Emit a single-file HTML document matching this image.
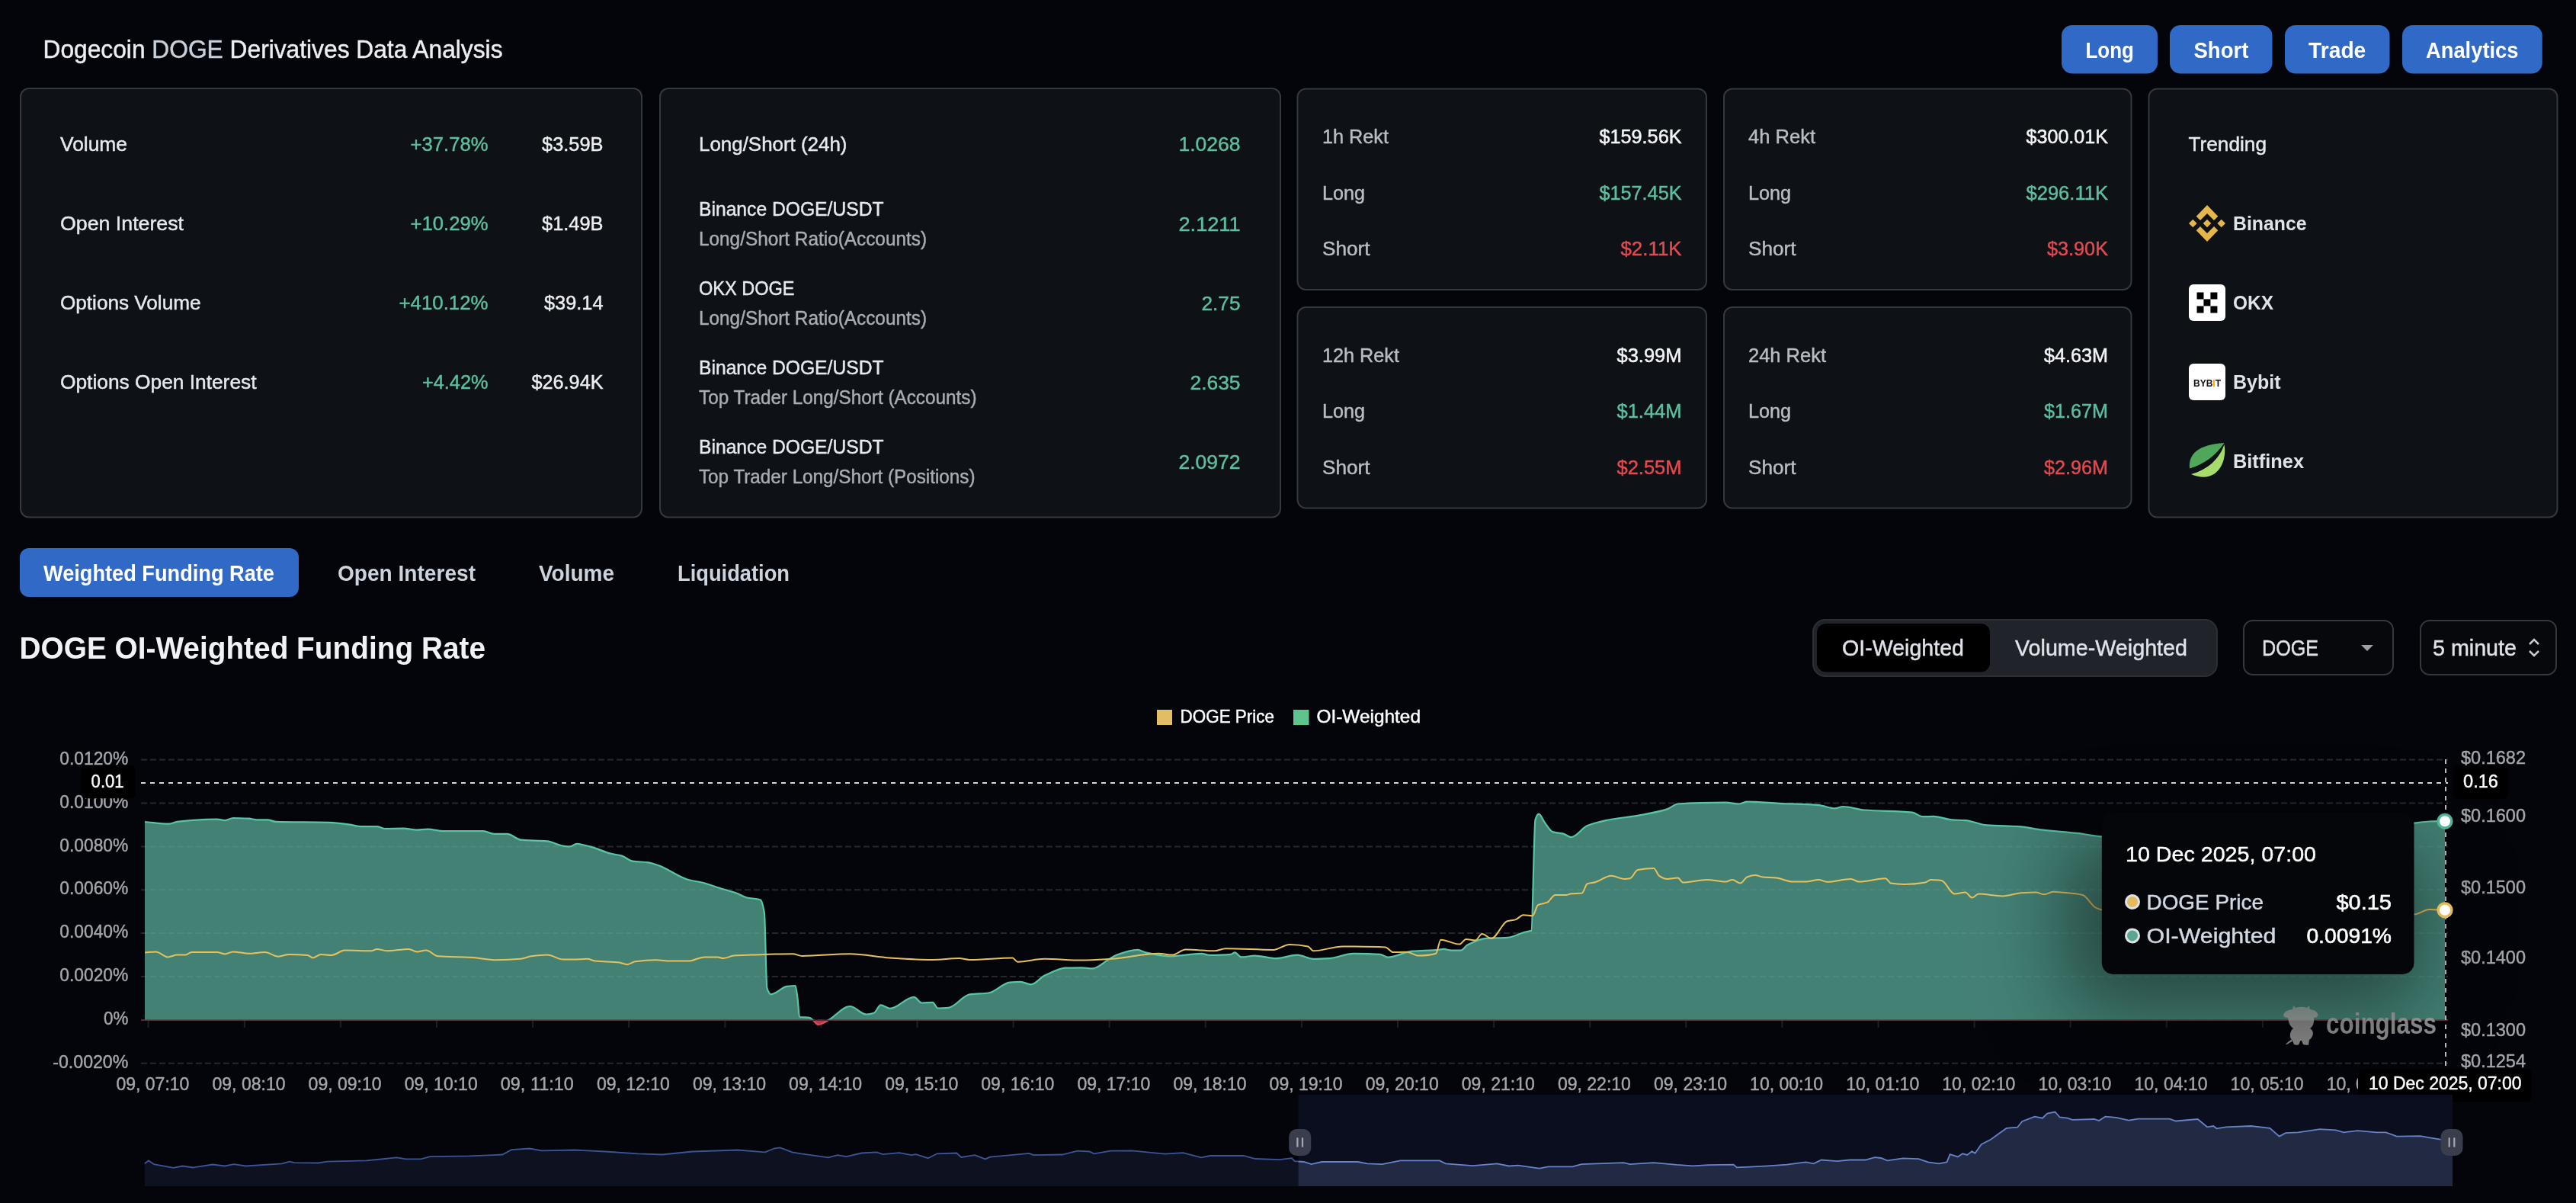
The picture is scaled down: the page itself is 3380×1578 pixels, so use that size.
<!DOCTYPE html>
<html><head><meta charset="utf-8"><title>Dogecoin DOGE Derivatives Data Analysis</title>
<style>
html,body{margin:0;padding:0;background:#04050a;width:3380px;height:1578px;overflow:hidden;}
svg{position:absolute;left:0;top:0;display:block;font-family:"Liberation Sans", sans-serif;will-change:transform;}
</style></head><body>
<svg width="3380" height="1578" viewBox="0 0 3380 1578">
<text x="56.5" y="76" font-size="33" fill="#eceef1" stroke="#eceef1" stroke-width="0.45" textLength="603" lengthAdjust="spacingAndGlyphs">Dogecoin <tspan fill="#c8d0da" stroke="#c8d0da">DOGE</tspan> Derivatives Data Analysis</text>
<rect x="2705.0" y="33.0" width="126.0" height="63.5" rx="14" fill="#3169c6"/>
<text x="2736.5" y="75.8" font-size="29" fill="#ffffff" font-weight="700" textLength="63.5" lengthAdjust="spacingAndGlyphs">Long</text>
<rect x="2847.0" y="33.0" width="134.5" height="63.5" rx="14" fill="#3169c6"/>
<text x="2878.5" y="75.8" font-size="29" fill="#ffffff" font-weight="700" textLength="71.8" lengthAdjust="spacingAndGlyphs">Short</text>
<rect x="2998.0" y="33.0" width="137.5" height="63.5" rx="14" fill="#3169c6"/>
<text x="3029.1" y="75.8" font-size="29" fill="#ffffff" font-weight="700" textLength="75.2" lengthAdjust="spacingAndGlyphs">Trade</text>
<rect x="3152.0" y="33.0" width="183.7" height="63.5" rx="14" fill="#3169c6"/>
<text x="3183.0" y="75.8" font-size="29" fill="#ffffff" font-weight="700" textLength="121.5" lengthAdjust="spacingAndGlyphs">Analytics</text>
<rect x="27.0" y="116.0" width="815.0" height="562.5" rx="11" fill="#0e1116" stroke="#343840" stroke-width="2"/>
<text x="79.0" y="198.3" font-size="26" fill="#e6e9ee" textLength="88.0" lengthAdjust="spacingAndGlyphs" stroke="#e6e9ee" stroke-width="0.45">Volume</text>
<text x="640.5" y="198.3" font-size="26" fill="#5cbf9f" text-anchor="end" textLength="102.0" lengthAdjust="spacingAndGlyphs" stroke="#5cbf9f" stroke-width="0.45">+37.78%</text>
<text x="791.5" y="198.3" font-size="26" fill="#eceef1" text-anchor="end" textLength="80.5" lengthAdjust="spacingAndGlyphs" stroke="#eceef1" stroke-width="0.45">$3.59B</text>
<text x="79.0" y="302.3" font-size="26" fill="#e6e9ee" textLength="162.0" lengthAdjust="spacingAndGlyphs" stroke="#e6e9ee" stroke-width="0.45">Open Interest</text>
<text x="640.5" y="302.3" font-size="26" fill="#5cbf9f" text-anchor="end" textLength="102.0" lengthAdjust="spacingAndGlyphs" stroke="#5cbf9f" stroke-width="0.45">+10.29%</text>
<text x="791.5" y="302.3" font-size="26" fill="#eceef1" text-anchor="end" textLength="80.5" lengthAdjust="spacingAndGlyphs" stroke="#eceef1" stroke-width="0.45">$1.49B</text>
<text x="79.0" y="406.3" font-size="26" fill="#e6e9ee" textLength="184.5" lengthAdjust="spacingAndGlyphs" stroke="#e6e9ee" stroke-width="0.45">Options Volume</text>
<text x="640.5" y="406.3" font-size="26" fill="#5cbf9f" text-anchor="end" textLength="117.0" lengthAdjust="spacingAndGlyphs" stroke="#5cbf9f" stroke-width="0.45">+410.12%</text>
<text x="791.5" y="406.3" font-size="26" fill="#eceef1" text-anchor="end" textLength="77.5" lengthAdjust="spacingAndGlyphs" stroke="#eceef1" stroke-width="0.45">$39.14</text>
<text x="79.0" y="510.3" font-size="26" fill="#e6e9ee" textLength="257.5" lengthAdjust="spacingAndGlyphs" stroke="#e6e9ee" stroke-width="0.45">Options Open Interest</text>
<text x="640.5" y="510.3" font-size="26" fill="#5cbf9f" text-anchor="end" textLength="86.5" lengthAdjust="spacingAndGlyphs" stroke="#5cbf9f" stroke-width="0.45">+4.42%</text>
<text x="791.5" y="510.3" font-size="26" fill="#eceef1" text-anchor="end" textLength="94.0" lengthAdjust="spacingAndGlyphs" stroke="#eceef1" stroke-width="0.45">$26.94K</text>
<rect x="866.0" y="116.0" width="814.0" height="562.5" rx="11" fill="#0e1116" stroke="#343840" stroke-width="2"/>
<text x="917.0" y="198.3" font-size="26" fill="#e6e9ee" textLength="194.5" lengthAdjust="spacingAndGlyphs" stroke="#e6e9ee" stroke-width="0.45">Long/Short (24h)</text>
<text x="1627.5" y="198.3" font-size="26" fill="#5cbf9f" text-anchor="end" textLength="81.0" lengthAdjust="spacingAndGlyphs" stroke="#5cbf9f" stroke-width="0.45">1.0268</text>
<text x="917.0" y="282.5" font-size="26" fill="#e6e9ee" textLength="242.5" lengthAdjust="spacingAndGlyphs" stroke="#e6e9ee" stroke-width="0.45">Binance DOGE/USDT</text>
<text x="917.0" y="322.1" font-size="25" fill="#a9adb3" textLength="299.0" lengthAdjust="spacingAndGlyphs" stroke="#a9adb3" stroke-width="0.45">Long/Short Ratio(Accounts)</text>
<text x="1627.5" y="302.8" font-size="26" fill="#5cbf9f" text-anchor="end" textLength="81.0" lengthAdjust="spacingAndGlyphs" stroke="#5cbf9f" stroke-width="0.45">2.1211</text>
<text x="917.0" y="386.5" font-size="26" fill="#e6e9ee" textLength="125.5" lengthAdjust="spacingAndGlyphs" stroke="#e6e9ee" stroke-width="0.45">OKX DOGE</text>
<text x="917.0" y="426.1" font-size="25" fill="#a9adb3" textLength="299.0" lengthAdjust="spacingAndGlyphs" stroke="#a9adb3" stroke-width="0.45">Long/Short Ratio(Accounts)</text>
<text x="1627.5" y="406.8" font-size="26" fill="#5cbf9f" text-anchor="end" textLength="51.0" lengthAdjust="spacingAndGlyphs" stroke="#5cbf9f" stroke-width="0.45">2.75</text>
<text x="917.0" y="490.5" font-size="26" fill="#e6e9ee" textLength="242.5" lengthAdjust="spacingAndGlyphs" stroke="#e6e9ee" stroke-width="0.45">Binance DOGE/USDT</text>
<text x="917.0" y="530.1" font-size="25" fill="#a9adb3" textLength="364.5" lengthAdjust="spacingAndGlyphs" stroke="#a9adb3" stroke-width="0.45">Top Trader Long/Short (Accounts)</text>
<text x="1627.5" y="510.8" font-size="26" fill="#5cbf9f" text-anchor="end" textLength="66.0" lengthAdjust="spacingAndGlyphs" stroke="#5cbf9f" stroke-width="0.45">2.635</text>
<text x="917.0" y="594.5" font-size="26" fill="#e6e9ee" textLength="242.5" lengthAdjust="spacingAndGlyphs" stroke="#e6e9ee" stroke-width="0.45">Binance DOGE/USDT</text>
<text x="917.0" y="634.1" font-size="25" fill="#a9adb3" textLength="362.5" lengthAdjust="spacingAndGlyphs" stroke="#a9adb3" stroke-width="0.45">Top Trader Long/Short (Positions)</text>
<text x="1627.5" y="614.8" font-size="26" fill="#5cbf9f" text-anchor="end" textLength="81.0" lengthAdjust="spacingAndGlyphs" stroke="#5cbf9f" stroke-width="0.45">2.0972</text>
<rect x="1702.5" y="116.5" width="536.5" height="263.5" rx="11" fill="#0e1116" stroke="#343840" stroke-width="2"/>
<text x="1735.0" y="188.2" font-size="25" fill="#b9bdc3" textLength="87.0" lengthAdjust="spacingAndGlyphs" stroke="#b9bdc3" stroke-width="0.45">1h Rekt</text>
<text x="2206.5" y="188.2" font-size="25" fill="#f3f4f6" text-anchor="end" textLength="108.0" lengthAdjust="spacingAndGlyphs" stroke="#f3f4f6" stroke-width="0.5">$159.56K</text>
<text x="1735.0" y="261.6" font-size="25" fill="#b9bdc3" textLength="56.0" lengthAdjust="spacingAndGlyphs" stroke="#b9bdc3" stroke-width="0.45">Long</text>
<text x="2206.5" y="261.6" font-size="25" fill="#5cbf9f" text-anchor="end" textLength="108.0" lengthAdjust="spacingAndGlyphs" stroke="#5cbf9f" stroke-width="0.45">$157.45K</text>
<text x="1735.0" y="335.4" font-size="25" fill="#b9bdc3" textLength="62.5" lengthAdjust="spacingAndGlyphs" stroke="#b9bdc3" stroke-width="0.45">Short</text>
<text x="2206.5" y="335.4" font-size="25" fill="#e5494e" text-anchor="end" textLength="80.0" lengthAdjust="spacingAndGlyphs" stroke="#e5494e" stroke-width="0.45">$2.11K</text>
<rect x="1702.5" y="403.0" width="536.5" height="263.5" rx="11" fill="#0e1116" stroke="#343840" stroke-width="2"/>
<text x="1735.0" y="474.7" font-size="25" fill="#b9bdc3" textLength="101.0" lengthAdjust="spacingAndGlyphs" stroke="#b9bdc3" stroke-width="0.45">12h Rekt</text>
<text x="2206.5" y="474.7" font-size="25" fill="#f3f4f6" text-anchor="end" textLength="85.0" lengthAdjust="spacingAndGlyphs" stroke="#f3f4f6" stroke-width="0.5">$3.99M</text>
<text x="1735.0" y="548.1" font-size="25" fill="#b9bdc3" textLength="56.0" lengthAdjust="spacingAndGlyphs" stroke="#b9bdc3" stroke-width="0.45">Long</text>
<text x="2206.5" y="548.1" font-size="25" fill="#5cbf9f" text-anchor="end" textLength="85.0" lengthAdjust="spacingAndGlyphs" stroke="#5cbf9f" stroke-width="0.45">$1.44M</text>
<text x="1735.0" y="621.9" font-size="25" fill="#b9bdc3" textLength="62.5" lengthAdjust="spacingAndGlyphs" stroke="#b9bdc3" stroke-width="0.45">Short</text>
<text x="2206.5" y="621.9" font-size="25" fill="#e5494e" text-anchor="end" textLength="85.0" lengthAdjust="spacingAndGlyphs" stroke="#e5494e" stroke-width="0.45">$2.55M</text>
<rect x="2262.0" y="116.5" width="534.5" height="263.5" rx="11" fill="#0e1116" stroke="#343840" stroke-width="2"/>
<text x="2294.0" y="188.2" font-size="25" fill="#b9bdc3" textLength="88.0" lengthAdjust="spacingAndGlyphs" stroke="#b9bdc3" stroke-width="0.45">4h Rekt</text>
<text x="2766.0" y="188.2" font-size="25" fill="#f3f4f6" text-anchor="end" textLength="107.5" lengthAdjust="spacingAndGlyphs" stroke="#f3f4f6" stroke-width="0.5">$300.01K</text>
<text x="2294.0" y="261.6" font-size="25" fill="#b9bdc3" textLength="56.0" lengthAdjust="spacingAndGlyphs" stroke="#b9bdc3" stroke-width="0.45">Long</text>
<text x="2766.0" y="261.6" font-size="25" fill="#5cbf9f" text-anchor="end" textLength="107.5" lengthAdjust="spacingAndGlyphs" stroke="#5cbf9f" stroke-width="0.45">$296.11K</text>
<text x="2294.0" y="335.4" font-size="25" fill="#b9bdc3" textLength="62.5" lengthAdjust="spacingAndGlyphs" stroke="#b9bdc3" stroke-width="0.45">Short</text>
<text x="2766.0" y="335.4" font-size="25" fill="#e5494e" text-anchor="end" textLength="80.0" lengthAdjust="spacingAndGlyphs" stroke="#e5494e" stroke-width="0.45">$3.90K</text>
<rect x="2262.0" y="403.0" width="534.5" height="263.5" rx="11" fill="#0e1116" stroke="#343840" stroke-width="2"/>
<text x="2294.0" y="474.7" font-size="25" fill="#b9bdc3" textLength="102.0" lengthAdjust="spacingAndGlyphs" stroke="#b9bdc3" stroke-width="0.45">24h Rekt</text>
<text x="2766.0" y="474.7" font-size="25" fill="#f3f4f6" text-anchor="end" textLength="84.0" lengthAdjust="spacingAndGlyphs" stroke="#f3f4f6" stroke-width="0.5">$4.63M</text>
<text x="2294.0" y="548.1" font-size="25" fill="#b9bdc3" textLength="56.0" lengthAdjust="spacingAndGlyphs" stroke="#b9bdc3" stroke-width="0.45">Long</text>
<text x="2766.0" y="548.1" font-size="25" fill="#5cbf9f" text-anchor="end" textLength="84.0" lengthAdjust="spacingAndGlyphs" stroke="#5cbf9f" stroke-width="0.45">$1.67M</text>
<text x="2294.0" y="621.9" font-size="25" fill="#b9bdc3" textLength="62.5" lengthAdjust="spacingAndGlyphs" stroke="#b9bdc3" stroke-width="0.45">Short</text>
<text x="2766.0" y="621.9" font-size="25" fill="#e5494e" text-anchor="end" textLength="84.0" lengthAdjust="spacingAndGlyphs" stroke="#e5494e" stroke-width="0.45">$2.96M</text>
<rect x="2819.5" y="116.5" width="536.0" height="562.0" rx="11" fill="#0e1116" stroke="#343840" stroke-width="2"/>
<text x="2871.5" y="198.3" font-size="26" fill="#e6e9ee" textLength="102.5" lengthAdjust="spacingAndGlyphs" stroke="#e6e9ee" stroke-width="0.45">Trending</text>
<text x="2930.0" y="302.0" font-size="26" fill="#dfe4eb" font-weight="700" textLength="96.5" lengthAdjust="spacingAndGlyphs">Binance</text>
<text x="2930.0" y="406.0" font-size="26" fill="#dfe4eb" font-weight="700" textLength="53.0" lengthAdjust="spacingAndGlyphs">OKX</text>
<text x="2930.0" y="510.0" font-size="26" fill="#dfe4eb" font-weight="700" textLength="62.5" lengthAdjust="spacingAndGlyphs">Bybit</text>
<text x="2930.0" y="614.0" font-size="26" fill="#dfe4eb" font-weight="700" textLength="93.0" lengthAdjust="spacingAndGlyphs">Bitfinex</text>
<g fill="#e5b649"><path d="M2896,287.7 L2901.3,293 L2896,298.3 L2890.7,293 Z"/><path d="M2877.3,287.7 L2882.6000000000004,293 L2877.3,298.3 L2872.0,293 Z"/><path d="M2914.7,287.7 L2920.0,293 L2914.7,298.3 L2909.3999999999996,293 Z"/><path d="M2896,269 L2910.3,283.7 L2905,289 L2896,280 L2887,289 L2881.7,283.7 Z"/><path d="M2896,317 L2910.3,302.3 L2905,297 L2896,306 L2887,297 L2881.7,302.3 Z"/></g>
<rect x="2872.0" y="373.0" width="48.0" height="48.0" rx="6" fill="#ffffff"/>
<rect x="2882.5" y="383.5" width="9.0" height="9.0" rx="0" fill="#000000"/>
<rect x="2900.4" y="383.5" width="9.0" height="9.0" rx="0" fill="#000000"/>
<rect x="2891.4" y="392.4" width="9.0" height="9.0" rx="0" fill="#000000"/>
<rect x="2882.5" y="401.5" width="9.0" height="9.0" rx="0" fill="#000000"/>
<rect x="2900.4" y="401.5" width="9.0" height="9.0" rx="0" fill="#000000"/>
<rect x="2872.0" y="477.0" width="48.0" height="48.0" rx="6" fill="#ffffff"/>
<text x="2878" y="506.7" font-size="12" font-weight="700" fill="#111" textLength="36" lengthAdjust="spacingAndGlyphs">BYB<tspan fill="#f7a600">I</tspan>T</text>
<path d="M2873,614.5 C2871,596 2884,583 2918.5,581 C2908,597 2892,609 2873,614.5 Z" fill="#4fa85a"/>
<path d="M2875,622 C2897,616 2912,602 2918.5,583 C2923,608 2907,636 2875,622 Z" fill="#a6dc6b"/>
<rect x="26.0" y="719.0" width="366.0" height="64.0" rx="12" fill="#3169c6"/>
<text x="57.0" y="761.7" font-size="30" fill="#ffffff" font-weight="700" textLength="303.0" lengthAdjust="spacingAndGlyphs">Weighted Funding Rate</text>
<text x="443.0" y="761.7" font-size="30" fill="#cdd3dc" font-weight="700" textLength="181.0" lengthAdjust="spacingAndGlyphs">Open Interest</text>
<text x="707.0" y="761.7" font-size="30" fill="#cdd3dc" font-weight="700" textLength="99.0" lengthAdjust="spacingAndGlyphs">Volume</text>
<text x="889.0" y="761.7" font-size="30" fill="#cdd3dc" font-weight="700" textLength="147.0" lengthAdjust="spacingAndGlyphs">Liquidation</text>
<text x="25.5" y="864.0" font-size="40" fill="#f0f2f5" font-weight="700" textLength="611.5" lengthAdjust="spacingAndGlyphs">DOGE OI-Weighted Funding Rate</text>
<rect x="2379.0" y="813.0" width="530.0" height="74.0" rx="16" fill="#202329" stroke="#2b2e35" stroke-width="2"/>
<rect x="2384.0" y="818.0" width="227.0" height="63.6" rx="12" fill="#000000"/>
<text x="2417.0" y="860.4" font-size="30" fill="#dfe3e9" textLength="160.0" lengthAdjust="spacingAndGlyphs" stroke="#dfe3e9" stroke-width="0.45">OI-Weighted</text>
<text x="2644.0" y="860.4" font-size="30" fill="#dfe3e9" textLength="226.0" lengthAdjust="spacingAndGlyphs" stroke="#dfe3e9" stroke-width="0.45">Volume-Weighted</text>
<rect x="2944.0" y="814.0" width="196.0" height="71.0" rx="12" fill="#07080c" stroke="#35383f" stroke-width="2"/>
<text x="2968.0" y="860.4" font-size="30" fill="#dfe3e9" textLength="74.0" lengthAdjust="spacingAndGlyphs" stroke="#dfe3e9" stroke-width="0.45">DOGE</text>
<path d="M3098,846 L3114,846 L3106,854 Z" fill="#9aa0a8"/>
<rect x="3176.0" y="814.0" width="178.0" height="71.0" rx="12" fill="#07080c" stroke="#35383f" stroke-width="2"/>
<text x="3192.0" y="860.4" font-size="30" fill="#dfe3e9" textLength="110.0" lengthAdjust="spacingAndGlyphs" stroke="#dfe3e9" stroke-width="0.45">5 minute</text>
<path d="M3319,845 L3325,839 L3331,845 M3319,854 L3325,860 L3331,854" fill="none" stroke="#c8ccd2" stroke-width="2.5"/>
<rect x="1518.0" y="931.0" width="20.0" height="20.0" rx="0" fill="#e3bd63"/>
<text x="1548.5" y="947.8" font-size="24" fill="#ffffff" textLength="123.5" lengthAdjust="spacingAndGlyphs" stroke="#ffffff" stroke-width="0.45">DOGE Price</text>
<rect x="1697.0" y="931.0" width="20.5" height="20.0" rx="0" fill="#5ec48e"/>
<text x="1727.5" y="947.8" font-size="24" fill="#ffffff" textLength="136.5" lengthAdjust="spacingAndGlyphs" stroke="#ffffff" stroke-width="0.45">OI-Weighted</text>
<line x1="185" y1="996.6" x2="3212" y2="996.6" stroke="#26282d" stroke-width="2" stroke-dasharray="8 4"/>
<line x1="185" y1="1053.5" x2="3212" y2="1053.5" stroke="#26282d" stroke-width="2" stroke-dasharray="8 4"/>
<line x1="185" y1="1110.4" x2="3212" y2="1110.4" stroke="#26282d" stroke-width="2" stroke-dasharray="8 4"/>
<line x1="185" y1="1167.2" x2="3212" y2="1167.2" stroke="#26282d" stroke-width="2" stroke-dasharray="8 4"/>
<line x1="185" y1="1224.1" x2="3212" y2="1224.1" stroke="#26282d" stroke-width="2" stroke-dasharray="8 4"/>
<line x1="185" y1="1281.0" x2="3212" y2="1281.0" stroke="#26282d" stroke-width="2" stroke-dasharray="8 4"/>
<line x1="185" y1="1337.9" x2="3212" y2="1337.9" stroke="#26282d" stroke-width="2" stroke-dasharray="8 4"/>
<line x1="185" y1="1394.8" x2="3212" y2="1394.8" stroke="#26282d" stroke-width="2" stroke-dasharray="8 4"/>
<text x="168.3" y="1002.8" font-size="24" fill="#a4a6a9" text-anchor="end" textLength="90.0" lengthAdjust="spacingAndGlyphs" stroke="#a4a6a9" stroke-width="0.45">0.0120%</text>
<text x="168.3" y="1059.7" font-size="24" fill="#a4a6a9" text-anchor="end" textLength="90.0" lengthAdjust="spacingAndGlyphs" stroke="#a4a6a9" stroke-width="0.45">0.0100%</text>
<text x="168.3" y="1116.6" font-size="24" fill="#a4a6a9" text-anchor="end" textLength="90.0" lengthAdjust="spacingAndGlyphs" stroke="#a4a6a9" stroke-width="0.45">0.0080%</text>
<text x="168.3" y="1173.4" font-size="24" fill="#a4a6a9" text-anchor="end" textLength="90.0" lengthAdjust="spacingAndGlyphs" stroke="#a4a6a9" stroke-width="0.45">0.0060%</text>
<text x="168.3" y="1230.3" font-size="24" fill="#a4a6a9" text-anchor="end" textLength="90.0" lengthAdjust="spacingAndGlyphs" stroke="#a4a6a9" stroke-width="0.45">0.0040%</text>
<text x="168.3" y="1287.2" font-size="24" fill="#a4a6a9" text-anchor="end" textLength="90.0" lengthAdjust="spacingAndGlyphs" stroke="#a4a6a9" stroke-width="0.45">0.0020%</text>
<text x="168.3" y="1344.1" font-size="24" fill="#a4a6a9" text-anchor="end" textLength="32.3" lengthAdjust="spacingAndGlyphs" stroke="#a4a6a9" stroke-width="0.45">0%</text>
<text x="168.3" y="1401.0" font-size="24" fill="#a4a6a9" text-anchor="end" textLength="99.0" lengthAdjust="spacingAndGlyphs" stroke="#a4a6a9" stroke-width="0.45">-0.0020%</text>
<text x="3229.0" y="1002.2" font-size="24" fill="#a4a6a9" textLength="85.0" lengthAdjust="spacingAndGlyphs" stroke="#a4a6a9" stroke-width="0.45">$0.1682</text>
<text x="3229.0" y="1078.2" font-size="24" fill="#a4a6a9" textLength="85.0" lengthAdjust="spacingAndGlyphs" stroke="#a4a6a9" stroke-width="0.45">$0.1600</text>
<text x="3229.0" y="1172.0" font-size="24" fill="#a4a6a9" textLength="85.0" lengthAdjust="spacingAndGlyphs" stroke="#a4a6a9" stroke-width="0.45">$0.1500</text>
<text x="3229.0" y="1264.4" font-size="24" fill="#a4a6a9" textLength="85.0" lengthAdjust="spacingAndGlyphs" stroke="#a4a6a9" stroke-width="0.45">$0.1400</text>
<text x="3229.0" y="1359.0" font-size="24" fill="#a4a6a9" textLength="85.0" lengthAdjust="spacingAndGlyphs" stroke="#a4a6a9" stroke-width="0.45">$0.1300</text>
<text x="3229.0" y="1400.0" font-size="24" fill="#a4a6a9" textLength="85.0" lengthAdjust="spacingAndGlyphs" stroke="#a4a6a9" stroke-width="0.45">$0.1254</text>
<clipPath id="above"><rect x="0" y="0" width="3380" height="1338"/></clipPath>
<clipPath id="below"><rect x="0" y="1338" width="3380" height="240"/></clipPath>
<line x1="194.7" y1="1338" x2="194.7" y2="1348" stroke="#1d1f25" stroke-width="2"/>
<line x1="320.8" y1="1338" x2="320.8" y2="1348" stroke="#1d1f25" stroke-width="2"/>
<line x1="446.9" y1="1338" x2="446.9" y2="1348" stroke="#1d1f25" stroke-width="2"/>
<line x1="573.0" y1="1338" x2="573.0" y2="1348" stroke="#1d1f25" stroke-width="2"/>
<line x1="699.1" y1="1338" x2="699.1" y2="1348" stroke="#1d1f25" stroke-width="2"/>
<line x1="825.2" y1="1338" x2="825.2" y2="1348" stroke="#1d1f25" stroke-width="2"/>
<line x1="951.3" y1="1338" x2="951.3" y2="1348" stroke="#1d1f25" stroke-width="2"/>
<line x1="1077.4" y1="1338" x2="1077.4" y2="1348" stroke="#1d1f25" stroke-width="2"/>
<line x1="1203.5" y1="1338" x2="1203.5" y2="1348" stroke="#1d1f25" stroke-width="2"/>
<line x1="1329.6" y1="1338" x2="1329.6" y2="1348" stroke="#1d1f25" stroke-width="2"/>
<line x1="1455.7" y1="1338" x2="1455.7" y2="1348" stroke="#1d1f25" stroke-width="2"/>
<line x1="1581.8" y1="1338" x2="1581.8" y2="1348" stroke="#1d1f25" stroke-width="2"/>
<line x1="1707.9" y1="1338" x2="1707.9" y2="1348" stroke="#1d1f25" stroke-width="2"/>
<line x1="1834.0" y1="1338" x2="1834.0" y2="1348" stroke="#1d1f25" stroke-width="2"/>
<line x1="1960.1" y1="1338" x2="1960.1" y2="1348" stroke="#1d1f25" stroke-width="2"/>
<line x1="2086.2" y1="1338" x2="2086.2" y2="1348" stroke="#1d1f25" stroke-width="2"/>
<line x1="2212.3" y1="1338" x2="2212.3" y2="1348" stroke="#1d1f25" stroke-width="2"/>
<line x1="2338.4" y1="1338" x2="2338.4" y2="1348" stroke="#1d1f25" stroke-width="2"/>
<line x1="2464.5" y1="1338" x2="2464.5" y2="1348" stroke="#1d1f25" stroke-width="2"/>
<line x1="2590.6" y1="1338" x2="2590.6" y2="1348" stroke="#1d1f25" stroke-width="2"/>
<line x1="2716.7" y1="1338" x2="2716.7" y2="1348" stroke="#1d1f25" stroke-width="2"/>
<line x1="2842.8" y1="1338" x2="2842.8" y2="1348" stroke="#1d1f25" stroke-width="2"/>
<line x1="2968.9" y1="1338" x2="2968.9" y2="1348" stroke="#1d1f25" stroke-width="2"/>
<line x1="3095.0" y1="1338" x2="3095.0" y2="1348" stroke="#1d1f25" stroke-width="2"/>
<path d="M190.0,1078.0 C200.7,1078.9 211.3,1080.7 222.0,1080.7 C225.5,1080.7 228.9,1078.3 232.4,1077.9 C249.9,1075.9 267.3,1074.7 284.8,1074.7 C288.3,1074.7 291.8,1076.1 295.3,1076.1 C298.8,1076.1 302.3,1073.0 305.8,1073.0 C312.8,1073.0 319.7,1073.3 326.7,1073.7 C330.2,1073.9 333.7,1075.4 337.2,1075.4 C341.9,1075.4 346.5,1075.4 351.2,1075.4 C354.7,1075.4 358.2,1077.8 361.7,1077.9 C385.0,1078.7 408.3,1078.2 431.6,1078.9 C440.9,1079.2 450.2,1080.5 459.5,1081.7 C464.2,1082.3 468.8,1084.2 473.5,1084.2 C480.5,1084.2 487.5,1084.2 494.5,1084.2 C498.0,1084.2 501.4,1087.0 504.9,1087.0 C513.1,1087.0 521.2,1086.6 529.4,1086.6 C535.2,1086.6 541.1,1088.7 546.9,1088.7 C551.6,1088.7 556.2,1087.7 560.9,1087.7 C567.9,1087.7 574.8,1090.1 581.8,1090.1 C599.3,1090.1 616.7,1090.1 634.2,1090.1 C638.9,1090.1 643.5,1093.9 648.2,1093.9 C654.0,1093.9 659.9,1093.9 665.7,1093.9 C671.5,1093.9 677.3,1101.0 683.1,1101.6 C694.8,1102.8 706.4,1102.3 718.1,1103.4 C725.1,1104.1 732.0,1108.9 739.0,1109.7 C741.9,1110.0 744.9,1110.4 747.8,1110.4 C750.7,1110.4 753.6,1106.9 756.5,1106.9 C762.3,1106.9 768.2,1109.0 774.0,1110.4 C783.3,1112.7 792.6,1117.5 801.9,1119.8 C806.6,1120.9 811.2,1121.3 815.9,1122.6 C820.6,1123.9 825.2,1128.9 829.9,1129.6 C836.9,1130.6 843.8,1130.4 850.8,1131.3 C855.5,1131.9 860.1,1133.8 864.8,1135.5 C877.6,1140.1 890.5,1150.5 903.3,1154.0 C909.1,1155.6 914.9,1156.1 920.7,1157.5 C930.0,1159.8 939.4,1163.5 948.7,1166.3 C954.5,1168.1 960.4,1169.4 966.2,1171.5 C970.8,1173.1 975.5,1176.4 980.1,1177.5 C985.9,1178.9 991.8,1178.1 997.6,1180.2 C999.4,1180.8 1001.1,1186.6 1002.9,1197.7 C1004.0,1204.8 1005.2,1291.7 1006.3,1295.5 C1008.1,1301.4 1009.8,1304.3 1011.6,1304.3 C1018.6,1304.3 1025.5,1294.6 1032.5,1293.8 C1036.2,1293.4 1040.0,1293.0 1043.7,1293.0 C1044.6,1293.0 1045.6,1302.6 1046.5,1309.5 C1047.3,1315.7 1048.2,1333.9 1049.0,1334.0 C1053.3,1334.7 1057.7,1334.2 1062.0,1334.8 C1063.8,1335.0 1065.7,1337.6 1067.5,1339.0 C1069.6,1340.6 1071.6,1344.0 1073.7,1344.0 C1075.8,1344.0 1077.9,1342.8 1080.0,1342.0 C1082.7,1340.9 1085.3,1339.1 1088.0,1337.5 C1097.1,1332.1 1106.2,1320.0 1115.3,1320.0 C1122.3,1320.0 1129.3,1330.5 1136.3,1330.5 C1139.8,1330.5 1143.3,1329.8 1146.8,1328.7 C1149.7,1327.8 1152.6,1318.3 1155.5,1318.3 C1159.6,1318.3 1163.6,1322.8 1167.7,1322.8 C1178.2,1322.8 1188.7,1307.8 1199.2,1307.8 C1202.7,1307.8 1206.1,1315.5 1209.6,1315.5 C1214.3,1315.5 1218.9,1314.8 1223.6,1314.8 C1225.9,1314.8 1228.3,1322.5 1230.6,1322.5 C1235.3,1322.5 1239.9,1322.2 1244.6,1321.8 C1253.9,1321.0 1263.2,1305.5 1272.5,1304.3 C1280.7,1303.2 1288.8,1303.5 1297.0,1302.5 C1306.3,1301.3 1315.7,1289.4 1325.0,1288.6 C1329.6,1288.2 1334.3,1287.9 1338.9,1287.9 C1343.6,1287.9 1348.2,1291.4 1352.9,1291.4 C1358.7,1291.4 1364.6,1282.6 1370.4,1279.8 C1379.7,1275.3 1389.0,1270.0 1398.3,1269.7 C1405.3,1269.5 1412.3,1269.3 1419.3,1269.3 C1424.0,1269.3 1428.6,1270.4 1433.3,1270.4 C1440.3,1270.4 1447.2,1262.8 1454.2,1258.9 C1457.7,1256.9 1461.2,1254.2 1464.7,1252.9 C1474.0,1249.4 1483.4,1245.9 1492.7,1245.9 C1496.2,1245.9 1499.6,1248.6 1503.1,1249.4 C1513.6,1251.8 1524.1,1254.3 1534.6,1254.3 C1548.6,1254.3 1562.5,1250.8 1576.5,1250.8 C1580.0,1250.8 1583.5,1252.9 1587.0,1252.9 C1596.3,1252.9 1605.7,1252.7 1615.0,1251.9 C1616.7,1251.8 1618.5,1249.4 1620.2,1249.4 C1623.1,1249.4 1626.0,1255.4 1628.9,1255.4 C1634.7,1255.4 1640.6,1253.6 1646.4,1253.6 C1655.7,1253.6 1665.0,1257.1 1674.3,1257.1 C1683.6,1257.1 1693.0,1252.6 1702.3,1252.6 C1709.3,1252.6 1716.3,1257.8 1723.3,1257.8 C1730.3,1257.8 1737.2,1257.5 1744.2,1257.1 C1754.7,1256.5 1765.2,1250.8 1775.7,1250.8 C1787.3,1250.8 1799.0,1251.1 1810.6,1251.9 C1814.1,1252.1 1817.6,1255.7 1821.1,1255.7 C1831.6,1255.7 1842.1,1248.6 1852.6,1247.7 C1864.2,1246.7 1875.9,1246.9 1887.5,1245.9 C1889.7,1245.7 1891.8,1244.9 1894.0,1244.9 C1897.5,1244.9 1901.0,1246.6 1904.5,1246.6 C1908.6,1246.6 1912.6,1246.6 1916.7,1246.6 C1919.6,1246.6 1922.5,1241.1 1925.4,1239.6 C1933.6,1235.3 1941.7,1231.4 1949.9,1230.9 C1959.2,1230.3 1968.5,1230.5 1977.8,1229.9 C1986.0,1229.4 1994.1,1224.1 2002.3,1222.2 C2004.6,1221.7 2007.0,1221.8 2009.3,1220.8 C2011.0,1220.1 2012.8,1080.8 2014.5,1075.4 C2016.0,1070.6 2017.6,1067.7 2019.1,1067.7 C2021.7,1067.7 2024.2,1075.5 2026.8,1078.9 C2030.3,1083.4 2033.7,1090.0 2037.2,1091.1 C2041.9,1092.6 2046.5,1092.4 2051.2,1093.6 C2054.7,1094.5 2058.2,1098.1 2061.7,1098.1 C2068.7,1098.1 2075.7,1086.0 2082.7,1083.1 C2090.8,1079.7 2099.0,1077.8 2107.1,1076.1 C2122.2,1073.0 2137.4,1071.9 2152.5,1069.1 C2164.2,1067.0 2175.8,1065.2 2187.5,1061.4 C2192.2,1059.9 2196.8,1054.8 2201.5,1054.5 C2222.4,1053.1 2243.4,1052.7 2264.3,1052.7 C2270.1,1052.7 2276.0,1054.5 2281.8,1054.5 C2285.3,1054.5 2288.8,1051.7 2292.3,1051.7 C2306.3,1051.7 2320.2,1053.1 2334.2,1053.8 C2351.7,1054.6 2369.1,1054.8 2386.6,1056.2 C2393.6,1056.8 2400.6,1060.4 2407.6,1060.4 C2411.1,1060.4 2414.6,1058.0 2418.1,1058.0 C2427.4,1058.0 2436.7,1061.7 2446.0,1062.5 C2467.0,1064.2 2487.9,1063.4 2508.9,1065.6 C2513.6,1066.1 2518.2,1071.2 2522.9,1071.2 C2527.6,1071.2 2532.2,1070.9 2536.9,1070.9 C2545.0,1070.9 2553.2,1074.9 2561.3,1075.4 C2567.1,1075.8 2573.0,1075.7 2578.8,1076.1 C2588.1,1076.7 2597.5,1081.7 2606.8,1082.4 C2620.8,1083.5 2634.7,1083.3 2648.7,1084.2 C2659.2,1084.9 2669.6,1087.5 2680.1,1088.7 C2695.3,1090.4 2710.4,1091.2 2725.6,1092.9 C2736.1,1094.1 2746.5,1096.5 2757.0,1097.4 C2771.3,1098.6 2785.7,1099.3 2800.0,1100.0 C2833.3,1101.6 2866.7,1104.0 2900.0,1104.0 C2933.3,1104.0 2966.7,1102.1 3000.0,1100.0 C3033.3,1097.9 3066.7,1089.7 3100.0,1086.0 C3122.7,1083.5 3145.3,1081.9 3168.0,1079.6 C3174.5,1078.9 3181.0,1077.8 3187.5,1077.5 C3194.3,1077.2 3201.2,1077.2 3208.0,1077.0 L3208,1338 L190,1338 Z" fill="#59ab9a" fill-opacity="0.75" clip-path="url(#above)"/>
<path d="M190.0,1078.0 C200.7,1078.9 211.3,1080.7 222.0,1080.7 C225.5,1080.7 228.9,1078.3 232.4,1077.9 C249.9,1075.9 267.3,1074.7 284.8,1074.7 C288.3,1074.7 291.8,1076.1 295.3,1076.1 C298.8,1076.1 302.3,1073.0 305.8,1073.0 C312.8,1073.0 319.7,1073.3 326.7,1073.7 C330.2,1073.9 333.7,1075.4 337.2,1075.4 C341.9,1075.4 346.5,1075.4 351.2,1075.4 C354.7,1075.4 358.2,1077.8 361.7,1077.9 C385.0,1078.7 408.3,1078.2 431.6,1078.9 C440.9,1079.2 450.2,1080.5 459.5,1081.7 C464.2,1082.3 468.8,1084.2 473.5,1084.2 C480.5,1084.2 487.5,1084.2 494.5,1084.2 C498.0,1084.2 501.4,1087.0 504.9,1087.0 C513.1,1087.0 521.2,1086.6 529.4,1086.6 C535.2,1086.6 541.1,1088.7 546.9,1088.7 C551.6,1088.7 556.2,1087.7 560.9,1087.7 C567.9,1087.7 574.8,1090.1 581.8,1090.1 C599.3,1090.1 616.7,1090.1 634.2,1090.1 C638.9,1090.1 643.5,1093.9 648.2,1093.9 C654.0,1093.9 659.9,1093.9 665.7,1093.9 C671.5,1093.9 677.3,1101.0 683.1,1101.6 C694.8,1102.8 706.4,1102.3 718.1,1103.4 C725.1,1104.1 732.0,1108.9 739.0,1109.7 C741.9,1110.0 744.9,1110.4 747.8,1110.4 C750.7,1110.4 753.6,1106.9 756.5,1106.9 C762.3,1106.9 768.2,1109.0 774.0,1110.4 C783.3,1112.7 792.6,1117.5 801.9,1119.8 C806.6,1120.9 811.2,1121.3 815.9,1122.6 C820.6,1123.9 825.2,1128.9 829.9,1129.6 C836.9,1130.6 843.8,1130.4 850.8,1131.3 C855.5,1131.9 860.1,1133.8 864.8,1135.5 C877.6,1140.1 890.5,1150.5 903.3,1154.0 C909.1,1155.6 914.9,1156.1 920.7,1157.5 C930.0,1159.8 939.4,1163.5 948.7,1166.3 C954.5,1168.1 960.4,1169.4 966.2,1171.5 C970.8,1173.1 975.5,1176.4 980.1,1177.5 C985.9,1178.9 991.8,1178.1 997.6,1180.2 C999.4,1180.8 1001.1,1186.6 1002.9,1197.7 C1004.0,1204.8 1005.2,1291.7 1006.3,1295.5 C1008.1,1301.4 1009.8,1304.3 1011.6,1304.3 C1018.6,1304.3 1025.5,1294.6 1032.5,1293.8 C1036.2,1293.4 1040.0,1293.0 1043.7,1293.0 C1044.6,1293.0 1045.6,1302.6 1046.5,1309.5 C1047.3,1315.7 1048.2,1333.9 1049.0,1334.0 C1053.3,1334.7 1057.7,1334.2 1062.0,1334.8 C1063.8,1335.0 1065.7,1337.6 1067.5,1339.0 C1069.6,1340.6 1071.6,1344.0 1073.7,1344.0 C1075.8,1344.0 1077.9,1342.8 1080.0,1342.0 C1082.7,1340.9 1085.3,1339.1 1088.0,1337.5 C1097.1,1332.1 1106.2,1320.0 1115.3,1320.0 C1122.3,1320.0 1129.3,1330.5 1136.3,1330.5 C1139.8,1330.5 1143.3,1329.8 1146.8,1328.7 C1149.7,1327.8 1152.6,1318.3 1155.5,1318.3 C1159.6,1318.3 1163.6,1322.8 1167.7,1322.8 C1178.2,1322.8 1188.7,1307.8 1199.2,1307.8 C1202.7,1307.8 1206.1,1315.5 1209.6,1315.5 C1214.3,1315.5 1218.9,1314.8 1223.6,1314.8 C1225.9,1314.8 1228.3,1322.5 1230.6,1322.5 C1235.3,1322.5 1239.9,1322.2 1244.6,1321.8 C1253.9,1321.0 1263.2,1305.5 1272.5,1304.3 C1280.7,1303.2 1288.8,1303.5 1297.0,1302.5 C1306.3,1301.3 1315.7,1289.4 1325.0,1288.6 C1329.6,1288.2 1334.3,1287.9 1338.9,1287.9 C1343.6,1287.9 1348.2,1291.4 1352.9,1291.4 C1358.7,1291.4 1364.6,1282.6 1370.4,1279.8 C1379.7,1275.3 1389.0,1270.0 1398.3,1269.7 C1405.3,1269.5 1412.3,1269.3 1419.3,1269.3 C1424.0,1269.3 1428.6,1270.4 1433.3,1270.4 C1440.3,1270.4 1447.2,1262.8 1454.2,1258.9 C1457.7,1256.9 1461.2,1254.2 1464.7,1252.9 C1474.0,1249.4 1483.4,1245.9 1492.7,1245.9 C1496.2,1245.9 1499.6,1248.6 1503.1,1249.4 C1513.6,1251.8 1524.1,1254.3 1534.6,1254.3 C1548.6,1254.3 1562.5,1250.8 1576.5,1250.8 C1580.0,1250.8 1583.5,1252.9 1587.0,1252.9 C1596.3,1252.9 1605.7,1252.7 1615.0,1251.9 C1616.7,1251.8 1618.5,1249.4 1620.2,1249.4 C1623.1,1249.4 1626.0,1255.4 1628.9,1255.4 C1634.7,1255.4 1640.6,1253.6 1646.4,1253.6 C1655.7,1253.6 1665.0,1257.1 1674.3,1257.1 C1683.6,1257.1 1693.0,1252.6 1702.3,1252.6 C1709.3,1252.6 1716.3,1257.8 1723.3,1257.8 C1730.3,1257.8 1737.2,1257.5 1744.2,1257.1 C1754.7,1256.5 1765.2,1250.8 1775.7,1250.8 C1787.3,1250.8 1799.0,1251.1 1810.6,1251.9 C1814.1,1252.1 1817.6,1255.7 1821.1,1255.7 C1831.6,1255.7 1842.1,1248.6 1852.6,1247.7 C1864.2,1246.7 1875.9,1246.9 1887.5,1245.9 C1889.7,1245.7 1891.8,1244.9 1894.0,1244.9 C1897.5,1244.9 1901.0,1246.6 1904.5,1246.6 C1908.6,1246.6 1912.6,1246.6 1916.7,1246.6 C1919.6,1246.6 1922.5,1241.1 1925.4,1239.6 C1933.6,1235.3 1941.7,1231.4 1949.9,1230.9 C1959.2,1230.3 1968.5,1230.5 1977.8,1229.9 C1986.0,1229.4 1994.1,1224.1 2002.3,1222.2 C2004.6,1221.7 2007.0,1221.8 2009.3,1220.8 C2011.0,1220.1 2012.8,1080.8 2014.5,1075.4 C2016.0,1070.6 2017.6,1067.7 2019.1,1067.7 C2021.7,1067.7 2024.2,1075.5 2026.8,1078.9 C2030.3,1083.4 2033.7,1090.0 2037.2,1091.1 C2041.9,1092.6 2046.5,1092.4 2051.2,1093.6 C2054.7,1094.5 2058.2,1098.1 2061.7,1098.1 C2068.7,1098.1 2075.7,1086.0 2082.7,1083.1 C2090.8,1079.7 2099.0,1077.8 2107.1,1076.1 C2122.2,1073.0 2137.4,1071.9 2152.5,1069.1 C2164.2,1067.0 2175.8,1065.2 2187.5,1061.4 C2192.2,1059.9 2196.8,1054.8 2201.5,1054.5 C2222.4,1053.1 2243.4,1052.7 2264.3,1052.7 C2270.1,1052.7 2276.0,1054.5 2281.8,1054.5 C2285.3,1054.5 2288.8,1051.7 2292.3,1051.7 C2306.3,1051.7 2320.2,1053.1 2334.2,1053.8 C2351.7,1054.6 2369.1,1054.8 2386.6,1056.2 C2393.6,1056.8 2400.6,1060.4 2407.6,1060.4 C2411.1,1060.4 2414.6,1058.0 2418.1,1058.0 C2427.4,1058.0 2436.7,1061.7 2446.0,1062.5 C2467.0,1064.2 2487.9,1063.4 2508.9,1065.6 C2513.6,1066.1 2518.2,1071.2 2522.9,1071.2 C2527.6,1071.2 2532.2,1070.9 2536.9,1070.9 C2545.0,1070.9 2553.2,1074.9 2561.3,1075.4 C2567.1,1075.8 2573.0,1075.7 2578.8,1076.1 C2588.1,1076.7 2597.5,1081.7 2606.8,1082.4 C2620.8,1083.5 2634.7,1083.3 2648.7,1084.2 C2659.2,1084.9 2669.6,1087.5 2680.1,1088.7 C2695.3,1090.4 2710.4,1091.2 2725.6,1092.9 C2736.1,1094.1 2746.5,1096.5 2757.0,1097.4 C2771.3,1098.6 2785.7,1099.3 2800.0,1100.0 C2833.3,1101.6 2866.7,1104.0 2900.0,1104.0 C2933.3,1104.0 2966.7,1102.1 3000.0,1100.0 C3033.3,1097.9 3066.7,1089.7 3100.0,1086.0 C3122.7,1083.5 3145.3,1081.9 3168.0,1079.6 C3174.5,1078.9 3181.0,1077.8 3187.5,1077.5 C3194.3,1077.2 3201.2,1077.2 3208.0,1077.0 L3208,1338 L190,1338 Z" fill="#b83a48" clip-path="url(#below)"/>
<path d="M190.0,1078.0 C200.7,1078.9 211.3,1080.7 222.0,1080.7 C225.5,1080.7 228.9,1078.3 232.4,1077.9 C249.9,1075.9 267.3,1074.7 284.8,1074.7 C288.3,1074.7 291.8,1076.1 295.3,1076.1 C298.8,1076.1 302.3,1073.0 305.8,1073.0 C312.8,1073.0 319.7,1073.3 326.7,1073.7 C330.2,1073.9 333.7,1075.4 337.2,1075.4 C341.9,1075.4 346.5,1075.4 351.2,1075.4 C354.7,1075.4 358.2,1077.8 361.7,1077.9 C385.0,1078.7 408.3,1078.2 431.6,1078.9 C440.9,1079.2 450.2,1080.5 459.5,1081.7 C464.2,1082.3 468.8,1084.2 473.5,1084.2 C480.5,1084.2 487.5,1084.2 494.5,1084.2 C498.0,1084.2 501.4,1087.0 504.9,1087.0 C513.1,1087.0 521.2,1086.6 529.4,1086.6 C535.2,1086.6 541.1,1088.7 546.9,1088.7 C551.6,1088.7 556.2,1087.7 560.9,1087.7 C567.9,1087.7 574.8,1090.1 581.8,1090.1 C599.3,1090.1 616.7,1090.1 634.2,1090.1 C638.9,1090.1 643.5,1093.9 648.2,1093.9 C654.0,1093.9 659.9,1093.9 665.7,1093.9 C671.5,1093.9 677.3,1101.0 683.1,1101.6 C694.8,1102.8 706.4,1102.3 718.1,1103.4 C725.1,1104.1 732.0,1108.9 739.0,1109.7 C741.9,1110.0 744.9,1110.4 747.8,1110.4 C750.7,1110.4 753.6,1106.9 756.5,1106.9 C762.3,1106.9 768.2,1109.0 774.0,1110.4 C783.3,1112.7 792.6,1117.5 801.9,1119.8 C806.6,1120.9 811.2,1121.3 815.9,1122.6 C820.6,1123.9 825.2,1128.9 829.9,1129.6 C836.9,1130.6 843.8,1130.4 850.8,1131.3 C855.5,1131.9 860.1,1133.8 864.8,1135.5 C877.6,1140.1 890.5,1150.5 903.3,1154.0 C909.1,1155.6 914.9,1156.1 920.7,1157.5 C930.0,1159.8 939.4,1163.5 948.7,1166.3 C954.5,1168.1 960.4,1169.4 966.2,1171.5 C970.8,1173.1 975.5,1176.4 980.1,1177.5 C985.9,1178.9 991.8,1178.1 997.6,1180.2 C999.4,1180.8 1001.1,1186.6 1002.9,1197.7 C1004.0,1204.8 1005.2,1291.7 1006.3,1295.5 C1008.1,1301.4 1009.8,1304.3 1011.6,1304.3 C1018.6,1304.3 1025.5,1294.6 1032.5,1293.8 C1036.2,1293.4 1040.0,1293.0 1043.7,1293.0 C1044.6,1293.0 1045.6,1302.6 1046.5,1309.5 C1047.3,1315.7 1048.2,1333.9 1049.0,1334.0 C1053.3,1334.7 1057.7,1334.2 1062.0,1334.8 C1063.8,1335.0 1065.7,1337.6 1067.5,1339.0 C1069.6,1340.6 1071.6,1344.0 1073.7,1344.0 C1075.8,1344.0 1077.9,1342.8 1080.0,1342.0 C1082.7,1340.9 1085.3,1339.1 1088.0,1337.5 C1097.1,1332.1 1106.2,1320.0 1115.3,1320.0 C1122.3,1320.0 1129.3,1330.5 1136.3,1330.5 C1139.8,1330.5 1143.3,1329.8 1146.8,1328.7 C1149.7,1327.8 1152.6,1318.3 1155.5,1318.3 C1159.6,1318.3 1163.6,1322.8 1167.7,1322.8 C1178.2,1322.8 1188.7,1307.8 1199.2,1307.8 C1202.7,1307.8 1206.1,1315.5 1209.6,1315.5 C1214.3,1315.5 1218.9,1314.8 1223.6,1314.8 C1225.9,1314.8 1228.3,1322.5 1230.6,1322.5 C1235.3,1322.5 1239.9,1322.2 1244.6,1321.8 C1253.9,1321.0 1263.2,1305.5 1272.5,1304.3 C1280.7,1303.2 1288.8,1303.5 1297.0,1302.5 C1306.3,1301.3 1315.7,1289.4 1325.0,1288.6 C1329.6,1288.2 1334.3,1287.9 1338.9,1287.9 C1343.6,1287.9 1348.2,1291.4 1352.9,1291.4 C1358.7,1291.4 1364.6,1282.6 1370.4,1279.8 C1379.7,1275.3 1389.0,1270.0 1398.3,1269.7 C1405.3,1269.5 1412.3,1269.3 1419.3,1269.3 C1424.0,1269.3 1428.6,1270.4 1433.3,1270.4 C1440.3,1270.4 1447.2,1262.8 1454.2,1258.9 C1457.7,1256.9 1461.2,1254.2 1464.7,1252.9 C1474.0,1249.4 1483.4,1245.9 1492.7,1245.9 C1496.2,1245.9 1499.6,1248.6 1503.1,1249.4 C1513.6,1251.8 1524.1,1254.3 1534.6,1254.3 C1548.6,1254.3 1562.5,1250.8 1576.5,1250.8 C1580.0,1250.8 1583.5,1252.9 1587.0,1252.9 C1596.3,1252.9 1605.7,1252.7 1615.0,1251.9 C1616.7,1251.8 1618.5,1249.4 1620.2,1249.4 C1623.1,1249.4 1626.0,1255.4 1628.9,1255.4 C1634.7,1255.4 1640.6,1253.6 1646.4,1253.6 C1655.7,1253.6 1665.0,1257.1 1674.3,1257.1 C1683.6,1257.1 1693.0,1252.6 1702.3,1252.6 C1709.3,1252.6 1716.3,1257.8 1723.3,1257.8 C1730.3,1257.8 1737.2,1257.5 1744.2,1257.1 C1754.7,1256.5 1765.2,1250.8 1775.7,1250.8 C1787.3,1250.8 1799.0,1251.1 1810.6,1251.9 C1814.1,1252.1 1817.6,1255.7 1821.1,1255.7 C1831.6,1255.7 1842.1,1248.6 1852.6,1247.7 C1864.2,1246.7 1875.9,1246.9 1887.5,1245.9 C1889.7,1245.7 1891.8,1244.9 1894.0,1244.9 C1897.5,1244.9 1901.0,1246.6 1904.5,1246.6 C1908.6,1246.6 1912.6,1246.6 1916.7,1246.6 C1919.6,1246.6 1922.5,1241.1 1925.4,1239.6 C1933.6,1235.3 1941.7,1231.4 1949.9,1230.9 C1959.2,1230.3 1968.5,1230.5 1977.8,1229.9 C1986.0,1229.4 1994.1,1224.1 2002.3,1222.2 C2004.6,1221.7 2007.0,1221.8 2009.3,1220.8 C2011.0,1220.1 2012.8,1080.8 2014.5,1075.4 C2016.0,1070.6 2017.6,1067.7 2019.1,1067.7 C2021.7,1067.7 2024.2,1075.5 2026.8,1078.9 C2030.3,1083.4 2033.7,1090.0 2037.2,1091.1 C2041.9,1092.6 2046.5,1092.4 2051.2,1093.6 C2054.7,1094.5 2058.2,1098.1 2061.7,1098.1 C2068.7,1098.1 2075.7,1086.0 2082.7,1083.1 C2090.8,1079.7 2099.0,1077.8 2107.1,1076.1 C2122.2,1073.0 2137.4,1071.9 2152.5,1069.1 C2164.2,1067.0 2175.8,1065.2 2187.5,1061.4 C2192.2,1059.9 2196.8,1054.8 2201.5,1054.5 C2222.4,1053.1 2243.4,1052.7 2264.3,1052.7 C2270.1,1052.7 2276.0,1054.5 2281.8,1054.5 C2285.3,1054.5 2288.8,1051.7 2292.3,1051.7 C2306.3,1051.7 2320.2,1053.1 2334.2,1053.8 C2351.7,1054.6 2369.1,1054.8 2386.6,1056.2 C2393.6,1056.8 2400.6,1060.4 2407.6,1060.4 C2411.1,1060.4 2414.6,1058.0 2418.1,1058.0 C2427.4,1058.0 2436.7,1061.7 2446.0,1062.5 C2467.0,1064.2 2487.9,1063.4 2508.9,1065.6 C2513.6,1066.1 2518.2,1071.2 2522.9,1071.2 C2527.6,1071.2 2532.2,1070.9 2536.9,1070.9 C2545.0,1070.9 2553.2,1074.9 2561.3,1075.4 C2567.1,1075.8 2573.0,1075.7 2578.8,1076.1 C2588.1,1076.7 2597.5,1081.7 2606.8,1082.4 C2620.8,1083.5 2634.7,1083.3 2648.7,1084.2 C2659.2,1084.9 2669.6,1087.5 2680.1,1088.7 C2695.3,1090.4 2710.4,1091.2 2725.6,1092.9 C2736.1,1094.1 2746.5,1096.5 2757.0,1097.4 C2771.3,1098.6 2785.7,1099.3 2800.0,1100.0 C2833.3,1101.6 2866.7,1104.0 2900.0,1104.0 C2933.3,1104.0 2966.7,1102.1 3000.0,1100.0 C3033.3,1097.9 3066.7,1089.7 3100.0,1086.0 C3122.7,1083.5 3145.3,1081.9 3168.0,1079.6 C3174.5,1078.9 3181.0,1077.8 3187.5,1077.5 C3194.3,1077.2 3201.2,1077.2 3208.0,1077.0" fill="none" stroke="#58c4a8" stroke-width="2.2" stroke-linejoin="round" clip-path="url(#above)"/>
<path d="M190.0,1078.0 C200.7,1078.9 211.3,1080.7 222.0,1080.7 C225.5,1080.7 228.9,1078.3 232.4,1077.9 C249.9,1075.9 267.3,1074.7 284.8,1074.7 C288.3,1074.7 291.8,1076.1 295.3,1076.1 C298.8,1076.1 302.3,1073.0 305.8,1073.0 C312.8,1073.0 319.7,1073.3 326.7,1073.7 C330.2,1073.9 333.7,1075.4 337.2,1075.4 C341.9,1075.4 346.5,1075.4 351.2,1075.4 C354.7,1075.4 358.2,1077.8 361.7,1077.9 C385.0,1078.7 408.3,1078.2 431.6,1078.9 C440.9,1079.2 450.2,1080.5 459.5,1081.7 C464.2,1082.3 468.8,1084.2 473.5,1084.2 C480.5,1084.2 487.5,1084.2 494.5,1084.2 C498.0,1084.2 501.4,1087.0 504.9,1087.0 C513.1,1087.0 521.2,1086.6 529.4,1086.6 C535.2,1086.6 541.1,1088.7 546.9,1088.7 C551.6,1088.7 556.2,1087.7 560.9,1087.7 C567.9,1087.7 574.8,1090.1 581.8,1090.1 C599.3,1090.1 616.7,1090.1 634.2,1090.1 C638.9,1090.1 643.5,1093.9 648.2,1093.9 C654.0,1093.9 659.9,1093.9 665.7,1093.9 C671.5,1093.9 677.3,1101.0 683.1,1101.6 C694.8,1102.8 706.4,1102.3 718.1,1103.4 C725.1,1104.1 732.0,1108.9 739.0,1109.7 C741.9,1110.0 744.9,1110.4 747.8,1110.4 C750.7,1110.4 753.6,1106.9 756.5,1106.9 C762.3,1106.9 768.2,1109.0 774.0,1110.4 C783.3,1112.7 792.6,1117.5 801.9,1119.8 C806.6,1120.9 811.2,1121.3 815.9,1122.6 C820.6,1123.9 825.2,1128.9 829.9,1129.6 C836.9,1130.6 843.8,1130.4 850.8,1131.3 C855.5,1131.9 860.1,1133.8 864.8,1135.5 C877.6,1140.1 890.5,1150.5 903.3,1154.0 C909.1,1155.6 914.9,1156.1 920.7,1157.5 C930.0,1159.8 939.4,1163.5 948.7,1166.3 C954.5,1168.1 960.4,1169.4 966.2,1171.5 C970.8,1173.1 975.5,1176.4 980.1,1177.5 C985.9,1178.9 991.8,1178.1 997.6,1180.2 C999.4,1180.8 1001.1,1186.6 1002.9,1197.7 C1004.0,1204.8 1005.2,1291.7 1006.3,1295.5 C1008.1,1301.4 1009.8,1304.3 1011.6,1304.3 C1018.6,1304.3 1025.5,1294.6 1032.5,1293.8 C1036.2,1293.4 1040.0,1293.0 1043.7,1293.0 C1044.6,1293.0 1045.6,1302.6 1046.5,1309.5 C1047.3,1315.7 1048.2,1333.9 1049.0,1334.0 C1053.3,1334.7 1057.7,1334.2 1062.0,1334.8 C1063.8,1335.0 1065.7,1337.6 1067.5,1339.0 C1069.6,1340.6 1071.6,1344.0 1073.7,1344.0 C1075.8,1344.0 1077.9,1342.8 1080.0,1342.0 C1082.7,1340.9 1085.3,1339.1 1088.0,1337.5 C1097.1,1332.1 1106.2,1320.0 1115.3,1320.0 C1122.3,1320.0 1129.3,1330.5 1136.3,1330.5 C1139.8,1330.5 1143.3,1329.8 1146.8,1328.7 C1149.7,1327.8 1152.6,1318.3 1155.5,1318.3 C1159.6,1318.3 1163.6,1322.8 1167.7,1322.8 C1178.2,1322.8 1188.7,1307.8 1199.2,1307.8 C1202.7,1307.8 1206.1,1315.5 1209.6,1315.5 C1214.3,1315.5 1218.9,1314.8 1223.6,1314.8 C1225.9,1314.8 1228.3,1322.5 1230.6,1322.5 C1235.3,1322.5 1239.9,1322.2 1244.6,1321.8 C1253.9,1321.0 1263.2,1305.5 1272.5,1304.3 C1280.7,1303.2 1288.8,1303.5 1297.0,1302.5 C1306.3,1301.3 1315.7,1289.4 1325.0,1288.6 C1329.6,1288.2 1334.3,1287.9 1338.9,1287.9 C1343.6,1287.9 1348.2,1291.4 1352.9,1291.4 C1358.7,1291.4 1364.6,1282.6 1370.4,1279.8 C1379.7,1275.3 1389.0,1270.0 1398.3,1269.7 C1405.3,1269.5 1412.3,1269.3 1419.3,1269.3 C1424.0,1269.3 1428.6,1270.4 1433.3,1270.4 C1440.3,1270.4 1447.2,1262.8 1454.2,1258.9 C1457.7,1256.9 1461.2,1254.2 1464.7,1252.9 C1474.0,1249.4 1483.4,1245.9 1492.7,1245.9 C1496.2,1245.9 1499.6,1248.6 1503.1,1249.4 C1513.6,1251.8 1524.1,1254.3 1534.6,1254.3 C1548.6,1254.3 1562.5,1250.8 1576.5,1250.8 C1580.0,1250.8 1583.5,1252.9 1587.0,1252.9 C1596.3,1252.9 1605.7,1252.7 1615.0,1251.9 C1616.7,1251.8 1618.5,1249.4 1620.2,1249.4 C1623.1,1249.4 1626.0,1255.4 1628.9,1255.4 C1634.7,1255.4 1640.6,1253.6 1646.4,1253.6 C1655.7,1253.6 1665.0,1257.1 1674.3,1257.1 C1683.6,1257.1 1693.0,1252.6 1702.3,1252.6 C1709.3,1252.6 1716.3,1257.8 1723.3,1257.8 C1730.3,1257.8 1737.2,1257.5 1744.2,1257.1 C1754.7,1256.5 1765.2,1250.8 1775.7,1250.8 C1787.3,1250.8 1799.0,1251.1 1810.6,1251.9 C1814.1,1252.1 1817.6,1255.7 1821.1,1255.7 C1831.6,1255.7 1842.1,1248.6 1852.6,1247.7 C1864.2,1246.7 1875.9,1246.9 1887.5,1245.9 C1889.7,1245.7 1891.8,1244.9 1894.0,1244.9 C1897.5,1244.9 1901.0,1246.6 1904.5,1246.6 C1908.6,1246.6 1912.6,1246.6 1916.7,1246.6 C1919.6,1246.6 1922.5,1241.1 1925.4,1239.6 C1933.6,1235.3 1941.7,1231.4 1949.9,1230.9 C1959.2,1230.3 1968.5,1230.5 1977.8,1229.9 C1986.0,1229.4 1994.1,1224.1 2002.3,1222.2 C2004.6,1221.7 2007.0,1221.8 2009.3,1220.8 C2011.0,1220.1 2012.8,1080.8 2014.5,1075.4 C2016.0,1070.6 2017.6,1067.7 2019.1,1067.7 C2021.7,1067.7 2024.2,1075.5 2026.8,1078.9 C2030.3,1083.4 2033.7,1090.0 2037.2,1091.1 C2041.9,1092.6 2046.5,1092.4 2051.2,1093.6 C2054.7,1094.5 2058.2,1098.1 2061.7,1098.1 C2068.7,1098.1 2075.7,1086.0 2082.7,1083.1 C2090.8,1079.7 2099.0,1077.8 2107.1,1076.1 C2122.2,1073.0 2137.4,1071.9 2152.5,1069.1 C2164.2,1067.0 2175.8,1065.2 2187.5,1061.4 C2192.2,1059.9 2196.8,1054.8 2201.5,1054.5 C2222.4,1053.1 2243.4,1052.7 2264.3,1052.7 C2270.1,1052.7 2276.0,1054.5 2281.8,1054.5 C2285.3,1054.5 2288.8,1051.7 2292.3,1051.7 C2306.3,1051.7 2320.2,1053.1 2334.2,1053.8 C2351.7,1054.6 2369.1,1054.8 2386.6,1056.2 C2393.6,1056.8 2400.6,1060.4 2407.6,1060.4 C2411.1,1060.4 2414.6,1058.0 2418.1,1058.0 C2427.4,1058.0 2436.7,1061.7 2446.0,1062.5 C2467.0,1064.2 2487.9,1063.4 2508.9,1065.6 C2513.6,1066.1 2518.2,1071.2 2522.9,1071.2 C2527.6,1071.2 2532.2,1070.9 2536.9,1070.9 C2545.0,1070.9 2553.2,1074.9 2561.3,1075.4 C2567.1,1075.8 2573.0,1075.7 2578.8,1076.1 C2588.1,1076.7 2597.5,1081.7 2606.8,1082.4 C2620.8,1083.5 2634.7,1083.3 2648.7,1084.2 C2659.2,1084.9 2669.6,1087.5 2680.1,1088.7 C2695.3,1090.4 2710.4,1091.2 2725.6,1092.9 C2736.1,1094.1 2746.5,1096.5 2757.0,1097.4 C2771.3,1098.6 2785.7,1099.3 2800.0,1100.0 C2833.3,1101.6 2866.7,1104.0 2900.0,1104.0 C2933.3,1104.0 2966.7,1102.1 3000.0,1100.0 C3033.3,1097.9 3066.7,1089.7 3100.0,1086.0 C3122.7,1083.5 3145.3,1081.9 3168.0,1079.6 C3174.5,1078.9 3181.0,1077.8 3187.5,1077.5 C3194.3,1077.2 3201.2,1077.2 3208.0,1077.0" fill="none" stroke="#e0455a" stroke-width="2.2" stroke-linejoin="round" clip-path="url(#below)"/>
<line x1="185" y1="1338.3" x2="3212" y2="1338.3" stroke="#5e2a31" stroke-width="1.6"/>
<path d="M190.0,1249.4 C194.8,1249.1 199.7,1248.4 204.5,1248.4 C209.7,1248.4 215.0,1255.4 220.2,1255.4 C224.3,1255.4 228.3,1252.6 232.4,1252.6 C235.9,1252.6 239.4,1252.6 242.9,1252.6 C245.8,1252.6 248.7,1249.1 251.6,1249.1 C262.7,1249.1 273.7,1249.1 284.8,1249.1 C288.3,1249.1 291.8,1251.5 295.3,1251.5 C298.8,1251.5 302.3,1248.4 305.8,1248.4 C312.8,1248.4 319.7,1250.8 326.7,1250.8 C333.7,1250.8 340.7,1249.1 347.7,1249.1 C353.5,1249.1 359.4,1254.7 365.2,1254.7 C369.9,1254.7 374.5,1251.9 379.2,1251.9 C387.3,1251.9 395.5,1252.2 403.6,1252.9 C405.9,1253.1 408.3,1256.4 410.6,1256.4 C414.1,1256.4 417.6,1251.9 421.1,1251.9 C425.8,1251.9 430.4,1252.9 435.1,1252.9 C440.9,1252.9 446.7,1246.6 452.5,1246.6 C464.2,1246.6 475.8,1247.3 487.5,1247.3 C489.8,1247.3 492.2,1244.9 494.5,1244.9 C499.1,1244.9 503.8,1247.3 508.4,1247.3 C517.7,1247.3 527.1,1244.9 536.4,1244.9 C539.9,1244.9 543.4,1248.4 546.9,1248.4 C551.0,1248.4 555.0,1246.6 559.1,1246.6 C564.3,1246.6 569.6,1253.9 574.8,1254.3 C588.8,1255.3 602.8,1255.0 616.8,1255.7 C628.4,1256.3 640.1,1259.2 651.7,1259.2 C662.2,1259.2 672.6,1258.7 683.1,1257.8 C687.8,1257.4 692.4,1254.9 697.1,1254.3 C704.1,1253.4 711.1,1252.6 718.1,1252.6 C725.1,1252.6 732.0,1258.5 739.0,1258.5 C743.7,1258.5 748.3,1258.5 753.0,1258.5 C758.8,1258.5 764.7,1257.8 770.5,1257.8 C774.0,1257.8 777.5,1260.2 781.0,1260.6 C791.5,1261.7 801.9,1261.3 812.4,1262.4 C815.9,1262.8 819.4,1265.2 822.9,1265.2 C826.4,1265.2 829.9,1261.8 833.4,1261.3 C842.7,1260.0 852.0,1259.2 861.3,1259.2 C867.1,1259.2 873.0,1260.6 878.8,1260.6 C887.0,1260.6 895.1,1260.6 903.3,1260.6 C910.3,1260.6 917.2,1255.4 924.2,1255.4 C930.0,1255.4 935.9,1255.4 941.7,1255.4 C944.0,1255.4 946.4,1257.1 948.7,1257.1 C953.4,1257.1 958.0,1254.0 962.7,1253.6 C970.7,1253.0 978.8,1252.9 986.8,1252.6 C1004.6,1252.0 1022.4,1251.2 1040.2,1251.2 C1044.3,1251.2 1048.3,1254.0 1052.4,1254.0 C1073.4,1254.0 1094.3,1251.2 1115.3,1251.2 C1132.8,1251.2 1150.2,1255.3 1167.7,1256.4 C1186.3,1257.6 1205.0,1258.9 1223.6,1258.9 C1235.3,1258.9 1246.9,1257.1 1258.6,1257.1 C1263.2,1257.1 1267.9,1258.9 1272.5,1258.9 C1291.1,1258.9 1309.8,1256.4 1328.4,1256.4 C1330.7,1256.4 1333.1,1261.7 1335.4,1261.7 C1347.1,1261.7 1358.7,1257.8 1370.4,1257.8 C1386.7,1257.8 1403.0,1259.6 1419.3,1259.6 C1432.1,1259.6 1444.9,1258.6 1457.7,1257.8 C1478.7,1256.5 1499.6,1250.8 1520.6,1250.8 C1526.4,1250.8 1532.3,1252.6 1538.1,1252.6 C1543.9,1252.6 1549.8,1245.6 1555.6,1245.6 C1568.4,1245.6 1581.2,1247.3 1594.0,1247.3 C1598.7,1247.3 1603.3,1244.2 1608.0,1244.2 C1629.0,1244.2 1649.9,1245.9 1670.9,1245.9 C1677.9,1245.9 1684.8,1238.9 1691.8,1238.9 C1700.0,1238.9 1708.1,1239.7 1716.3,1241.4 C1718.6,1241.9 1721.0,1247.3 1723.3,1247.3 C1736.1,1247.3 1748.9,1241.4 1761.7,1241.4 C1780.3,1241.4 1799.0,1241.6 1817.6,1242.4 C1821.1,1242.6 1824.6,1249.1 1828.1,1249.1 C1833.9,1249.1 1839.8,1248.7 1845.6,1248.7 C1850.8,1248.7 1856.1,1253.6 1861.3,1253.6 C1868.9,1253.6 1876.5,1253.0 1884.1,1250.8 C1886.2,1250.2 1888.4,1232.7 1890.5,1232.7 C1898.6,1232.7 1906.8,1238.6 1914.9,1238.6 C1917.8,1238.6 1920.8,1232.0 1923.7,1232.0 C1927.8,1232.0 1931.8,1233.4 1935.9,1233.4 C1938.8,1233.4 1941.7,1225.0 1944.6,1225.0 C1948.7,1225.0 1952.8,1230.9 1956.9,1230.9 C1963.9,1230.9 1970.8,1210.1 1977.8,1208.2 C1981.3,1207.2 1984.8,1207.3 1988.3,1206.4 C1991.8,1205.5 1995.3,1200.2 1998.8,1200.2 C2002.9,1200.2 2006.9,1201.2 2011.0,1201.2 C2013.3,1201.2 2015.7,1188.5 2018.0,1187.2 C2022.1,1185.0 2026.1,1185.5 2030.2,1183.7 C2033.7,1182.1 2037.2,1174.0 2040.7,1174.0 C2045.4,1174.0 2050.0,1174.0 2054.7,1174.0 C2057.0,1174.0 2059.4,1172.4 2061.7,1172.2 C2066.4,1171.8 2071.0,1172.0 2075.7,1171.5 C2078.0,1171.2 2080.4,1160.2 2082.7,1159.3 C2086.2,1158.0 2089.6,1158.1 2093.1,1157.2 C2100.1,1155.4 2107.1,1148.8 2114.1,1148.8 C2119.9,1148.8 2125.8,1153.0 2131.6,1153.0 C2133.9,1153.0 2136.3,1152.7 2138.6,1152.3 C2142.1,1151.7 2145.5,1141.8 2149.0,1141.1 C2156.0,1139.7 2163.0,1139.0 2170.0,1139.0 C2172.3,1139.0 2174.7,1147.3 2177.0,1148.8 C2180.5,1151.1 2184.0,1153.0 2187.5,1153.0 C2192.2,1153.0 2196.8,1151.6 2201.5,1151.6 C2203.8,1151.6 2206.1,1157.5 2208.4,1157.5 C2218.9,1157.5 2229.4,1154.0 2239.9,1154.0 C2248.0,1154.0 2256.2,1156.5 2264.3,1156.5 C2267.2,1156.5 2270.2,1154.0 2273.1,1154.0 C2276.6,1154.0 2280.1,1158.6 2283.6,1158.6 C2286.5,1158.6 2289.4,1151.6 2292.3,1150.5 C2295.8,1149.2 2299.3,1148.1 2302.8,1148.1 C2306.3,1148.1 2309.8,1150.1 2313.3,1150.5 C2319.1,1151.1 2324.9,1151.0 2330.7,1151.6 C2337.7,1152.3 2344.7,1156.5 2351.7,1156.5 C2357.5,1156.5 2363.4,1156.5 2369.2,1156.5 C2375.0,1156.5 2380.8,1154.0 2386.6,1154.0 C2390.1,1154.0 2393.6,1156.8 2397.1,1156.8 C2407.6,1156.8 2418.1,1153.0 2428.6,1153.0 C2432.1,1153.0 2435.5,1156.5 2439.0,1156.5 C2450.7,1156.5 2462.3,1152.3 2474.0,1152.3 C2476.3,1152.3 2478.7,1158.2 2481.0,1158.6 C2486.8,1159.6 2492.7,1160.0 2498.5,1160.0 C2507.8,1160.0 2517.1,1159.1 2526.4,1157.5 C2528.7,1157.1 2531.1,1154.0 2533.4,1154.0 C2538.1,1154.0 2542.7,1154.4 2547.4,1155.1 C2553.2,1155.9 2559.0,1172.6 2564.8,1172.6 C2569.5,1172.6 2574.1,1170.5 2578.8,1170.5 C2581.7,1170.5 2584.7,1177.5 2587.6,1177.5 C2590.5,1177.5 2593.4,1172.6 2596.3,1172.6 C2606.8,1172.6 2617.2,1175.4 2627.7,1175.4 C2635.9,1175.4 2644.0,1171.7 2652.2,1171.2 C2658.6,1170.8 2665.0,1170.5 2671.4,1170.5 C2674.9,1170.5 2678.4,1173.3 2681.9,1173.3 C2686.0,1173.3 2690.0,1169.8 2694.1,1169.8 C2698.8,1169.8 2703.4,1170.4 2708.1,1170.8 C2716.3,1171.5 2724.4,1172.0 2732.6,1174.0 C2738.4,1175.4 2744.2,1187.9 2750.0,1190.7 C2752.3,1191.8 2754.7,1192.9 2757.0,1193.2 C2788.0,1197.8 2819.0,1200.0 2850.0,1200.0 C2883.3,1200.0 2916.7,1198.7 2950.0,1198.0 C2983.3,1197.3 3016.7,1196.0 3050.0,1196.0 C3089.3,1196.0 3128.7,1199.4 3168.0,1199.4 C3174.5,1199.4 3181.0,1193.0 3187.5,1193.0 C3194.3,1193.0 3201.2,1193.5 3208.0,1193.8" fill="none" stroke="#e8c15a" stroke-width="2" stroke-linejoin="round"/>
<text x="200.4" y="1429.7" font-size="24" fill="#a4a6a9" text-anchor="middle" textLength="96.0" lengthAdjust="spacingAndGlyphs" stroke="#a4a6a9" stroke-width="0.45">09, 07:10</text>
<text x="326.5" y="1429.7" font-size="24" fill="#a4a6a9" text-anchor="middle" textLength="96.0" lengthAdjust="spacingAndGlyphs" stroke="#a4a6a9" stroke-width="0.45">09, 08:10</text>
<text x="452.6" y="1429.7" font-size="24" fill="#a4a6a9" text-anchor="middle" textLength="96.0" lengthAdjust="spacingAndGlyphs" stroke="#a4a6a9" stroke-width="0.45">09, 09:10</text>
<text x="578.7" y="1429.7" font-size="24" fill="#a4a6a9" text-anchor="middle" textLength="96.0" lengthAdjust="spacingAndGlyphs" stroke="#a4a6a9" stroke-width="0.45">09, 10:10</text>
<text x="704.8" y="1429.7" font-size="24" fill="#a4a6a9" text-anchor="middle" textLength="96.0" lengthAdjust="spacingAndGlyphs" stroke="#a4a6a9" stroke-width="0.45">09, 11:10</text>
<text x="830.9" y="1429.7" font-size="24" fill="#a4a6a9" text-anchor="middle" textLength="96.0" lengthAdjust="spacingAndGlyphs" stroke="#a4a6a9" stroke-width="0.45">09, 12:10</text>
<text x="957.0" y="1429.7" font-size="24" fill="#a4a6a9" text-anchor="middle" textLength="96.0" lengthAdjust="spacingAndGlyphs" stroke="#a4a6a9" stroke-width="0.45">09, 13:10</text>
<text x="1083.1" y="1429.7" font-size="24" fill="#a4a6a9" text-anchor="middle" textLength="96.0" lengthAdjust="spacingAndGlyphs" stroke="#a4a6a9" stroke-width="0.45">09, 14:10</text>
<text x="1209.2" y="1429.7" font-size="24" fill="#a4a6a9" text-anchor="middle" textLength="96.0" lengthAdjust="spacingAndGlyphs" stroke="#a4a6a9" stroke-width="0.45">09, 15:10</text>
<text x="1335.3" y="1429.7" font-size="24" fill="#a4a6a9" text-anchor="middle" textLength="96.0" lengthAdjust="spacingAndGlyphs" stroke="#a4a6a9" stroke-width="0.45">09, 16:10</text>
<text x="1461.4" y="1429.7" font-size="24" fill="#a4a6a9" text-anchor="middle" textLength="96.0" lengthAdjust="spacingAndGlyphs" stroke="#a4a6a9" stroke-width="0.45">09, 17:10</text>
<text x="1587.5" y="1429.7" font-size="24" fill="#a4a6a9" text-anchor="middle" textLength="96.0" lengthAdjust="spacingAndGlyphs" stroke="#a4a6a9" stroke-width="0.45">09, 18:10</text>
<text x="1713.6" y="1429.7" font-size="24" fill="#a4a6a9" text-anchor="middle" textLength="96.0" lengthAdjust="spacingAndGlyphs" stroke="#a4a6a9" stroke-width="0.45">09, 19:10</text>
<text x="1839.7" y="1429.7" font-size="24" fill="#a4a6a9" text-anchor="middle" textLength="96.0" lengthAdjust="spacingAndGlyphs" stroke="#a4a6a9" stroke-width="0.45">09, 20:10</text>
<text x="1965.8" y="1429.7" font-size="24" fill="#a4a6a9" text-anchor="middle" textLength="96.0" lengthAdjust="spacingAndGlyphs" stroke="#a4a6a9" stroke-width="0.45">09, 21:10</text>
<text x="2091.9" y="1429.7" font-size="24" fill="#a4a6a9" text-anchor="middle" textLength="96.0" lengthAdjust="spacingAndGlyphs" stroke="#a4a6a9" stroke-width="0.45">09, 22:10</text>
<text x="2218.0" y="1429.7" font-size="24" fill="#a4a6a9" text-anchor="middle" textLength="96.0" lengthAdjust="spacingAndGlyphs" stroke="#a4a6a9" stroke-width="0.45">09, 23:10</text>
<text x="2344.1" y="1429.7" font-size="24" fill="#a4a6a9" text-anchor="middle" textLength="96.0" lengthAdjust="spacingAndGlyphs" stroke="#a4a6a9" stroke-width="0.45">10, 00:10</text>
<text x="2470.2" y="1429.7" font-size="24" fill="#a4a6a9" text-anchor="middle" textLength="96.0" lengthAdjust="spacingAndGlyphs" stroke="#a4a6a9" stroke-width="0.45">10, 01:10</text>
<text x="2596.3" y="1429.7" font-size="24" fill="#a4a6a9" text-anchor="middle" textLength="96.0" lengthAdjust="spacingAndGlyphs" stroke="#a4a6a9" stroke-width="0.45">10, 02:10</text>
<text x="2722.4" y="1429.7" font-size="24" fill="#a4a6a9" text-anchor="middle" textLength="96.0" lengthAdjust="spacingAndGlyphs" stroke="#a4a6a9" stroke-width="0.45">10, 03:10</text>
<text x="2848.5" y="1429.7" font-size="24" fill="#a4a6a9" text-anchor="middle" textLength="96.0" lengthAdjust="spacingAndGlyphs" stroke="#a4a6a9" stroke-width="0.45">10, 04:10</text>
<text x="2974.6" y="1429.7" font-size="24" fill="#a4a6a9" text-anchor="middle" textLength="96.0" lengthAdjust="spacingAndGlyphs" stroke="#a4a6a9" stroke-width="0.45">10, 05:10</text>
<text x="3100.7" y="1429.7" font-size="24" fill="#a4a6a9" text-anchor="middle" textLength="96.0" lengthAdjust="spacingAndGlyphs" stroke="#a4a6a9" stroke-width="0.45">10, 06:10</text>
<g fill="#a9a9a9" fill-opacity="0.8"><path d="M3009,1319 L3012,1322 Q3019.5,1319.5 3027,1322 L3029.6,1319 L3031,1324 Q3040,1325 3041.6,1331 Q3041,1335 3036,1335 Q3037,1345 3031,1349 Q3036,1352 3034.6,1358 Q3033,1362 3030,1364 L3029,1370.7 Q3024,1371 3022,1370 L3020,1365 L3018.5,1365 L3016,1370.5 Q3012,1371 3010,1370 L3008,1365 Q3004,1362 3005,1356 Q3006,1351 3009,1349 Q3003,1345 3002,1335 Q2996,1335 2996,1331 Q2998,1325 3008,1324 Z"/><path d="M3006.5,1363.5 Q3002,1366.5 2999,1370 L3001,1370 Q3004,1367.5 3008,1366 Z"/></g>
<text x="3052.0" y="1356.0" font-size="38" fill="#a9a9a9" font-weight="700" textLength="145.0" lengthAdjust="spacingAndGlyphs" fill-opacity="0.85">coinglass</text>
<line x1="185" y1="1027" x2="3212" y2="1027" stroke="#d8d8d8" stroke-width="2" stroke-dasharray="6 6"/>
<line x1="3209" y1="996" x2="3209" y2="1400" stroke="#bdbdbd" stroke-width="2" stroke-dasharray="6 6"/>
<rect x="106.5" y="1004.0" width="71.5" height="43.3" rx="6" fill="#000000"/>
<text x="119.6" y="1032.8" font-size="24" fill="#ffffff" textLength="43.0" lengthAdjust="spacingAndGlyphs" stroke="#ffffff" stroke-width="0.45">0.01</text>
<rect x="3219.5" y="1004.3" width="71.5" height="43.6" rx="6" fill="#000000"/>
<text x="3232.0" y="1033.0" font-size="24" fill="#ffffff" textLength="46.0" lengthAdjust="spacingAndGlyphs" stroke="#ffffff" stroke-width="0.45">0.16</text>
<rect x="3094.0" y="1402.7" width="228.0" height="42.3" rx="7" fill="#000000"/>
<text x="3108.0" y="1429.4" font-size="24" fill="#ffffff" textLength="200.5" lengthAdjust="spacingAndGlyphs" stroke="#ffffff" stroke-width="0.45">10 Dec 2025, 07:00</text>
<filter id="sh" x="-60%" y="-80%" width="220%" height="260%"><feGaussianBlur stdDeviation="55"/></filter>
<rect x="2710" y="1100" width="470" height="225" rx="30" fill="#000" fill-opacity="0.45" filter="url(#sh)"/>
<rect x="2757.8" y="1066.0" width="409.7" height="212.0" rx="15" fill="#05060a"/>
<text x="2789.0" y="1129.7" font-size="28" fill="#ffffff" textLength="250.0" lengthAdjust="spacingAndGlyphs" stroke="#ffffff" stroke-width="0.45">10 Dec 2025, 07:00</text>
<circle cx="2798" cy="1183" r="8.5" fill="#e3bb5d" stroke="#dde3ea" stroke-width="3"/>
<circle cx="2798" cy="1227.4" r="8.5" fill="#5aa78f" stroke="#dde3ea" stroke-width="3"/>
<text x="2816.5" y="1193.0" font-size="28" fill="#d2d9e2" textLength="153.5" lengthAdjust="spacingAndGlyphs" stroke="#d2d9e2" stroke-width="0.45">DOGE Price</text>
<text x="2816.5" y="1237.0" font-size="28" fill="#d2d9e2" textLength="170.0" lengthAdjust="spacingAndGlyphs" stroke="#d2d9e2" stroke-width="0.45">OI-Weighted</text>
<text x="3138.0" y="1193.0" font-size="28" fill="#ffffff" text-anchor="end" textLength="72.6" lengthAdjust="spacingAndGlyphs" stroke="#fff" stroke-width="0.6">$0.15</text>
<text x="3138.0" y="1237.0" font-size="28" fill="#ffffff" text-anchor="end" textLength="111.6" lengthAdjust="spacingAndGlyphs" stroke="#fff" stroke-width="0.6">0.0091%</text>
<circle cx="3208" cy="1077.3" r="8.8" fill="#ffffff" stroke="#52b296" stroke-width="3.6"/>
<circle cx="3208" cy="1193.8" r="8.8" fill="#ffffff" stroke="#e3bb5d" stroke-width="3.6"/>
<rect x="1703.5" y="1436.0" width="1514.5" height="120.0" rx="0" fill="#0a0e1e"/>
<clipPath id="dzin"><rect x="1703.5" y="1400" width="1514.5" height="170"/></clipPath>
<clipPath id="dzout"><rect x="0" y="1400" width="1703.5" height="170"/></clipPath>
<polygon points="189.9,1526.3 195.0,1522.4 201.8,1527.1 227.5,1531.9 239.4,1529.5 253.3,1531.5 279.0,1527.5 294.9,1529.5 306.7,1527.1 322.6,1529.5 370.1,1526.3 380.0,1523.6 385.9,1525.1 417.6,1525.5 429.5,1523.6 481.0,1522.4 520.6,1518.4 532.5,1520.4 552.3,1520.4 564.2,1517.2 615.6,1516.4 647.3,1515.2 659.2,1514.5 671.1,1508.1 694.9,1506.5 710.7,1509.3 754.3,1508.5 793.9,1510.5 837.4,1513.3 869.1,1514.5 908.7,1510.5 968.1,1508.5 1003.8,1511.3 1015.6,1506.5 1023.6,1505.3 1039.4,1511.3 1051.3,1513.3 1087.0,1518.4 1098.8,1515.2 1110.7,1517.2 1130.5,1512.5 1150.3,1511.3 1158.2,1514.1 1180.0,1512.1 1195.8,1515.2 1201.8,1514.1 1217.6,1519.2 1229.5,1513.3 1255.2,1512.5 1261.2,1518.0 1279.0,1515.2 1292.9,1520.4 1298.8,1517.6 1326.5,1515.2 1350.3,1512.9 1356.2,1515.2 1393.9,1514.5 1413.7,1509.7 1429.5,1510.5 1435.4,1513.3 1457.2,1509.7 1485.0,1509.3 1528.5,1513.7 1552.3,1512.1 1576.0,1518.4 1587.9,1516.0 1631.5,1516.0 1647.3,1520.0 1679.0,1521.2 1694.9,1519.2 1698.8,1523.2 1710.7,1524.0 1720.6,1527.1 1734.5,1524.0 1782.0,1524.0 1793.9,1526.3 1813.7,1527.1 1837.4,1522.4 1888.9,1522.4 1896.8,1526.3 1932.5,1529.1 1964.2,1526.3 1980.0,1529.5 1991.9,1528.7 2019.6,1532.7 2031.5,1530.3 2063.2,1530.3 2075.0,1527.1 2130.5,1525.1 2138.4,1527.1 2170.0,1525.1 2200.2,1527.9 2221.2,1529.3 2241.7,1528.1 2274.7,1527.7 2278.8,1531.4 2319.9,1529.3 2344.6,1527.7 2369.3,1524.4 2379.6,1526.4 2389.9,1521.5 2410.5,1523.1 2426.9,1521.5 2447.5,1521.5 2459.8,1518.2 2468.1,1519.0 2476.3,1522.3 2496.9,1519.4 2517.4,1520.2 2529.8,1524.4 2544.2,1526.4 2554.5,1524.4 2558.6,1514.1 2568.9,1517.4 2575.1,1513.3 2581.2,1514.9 2587.4,1510.0 2591.5,1512.8 2599.8,1500.9 2612.1,1494.7 2622.4,1487.3 2632.7,1479.9 2647.1,1478.7 2653.3,1470.9 2669.7,1464.7 2680.0,1466.7 2686.2,1460.6 2696.5,1458.5 2702.6,1465.5 2712.9,1466.7 2719.1,1468.8 2747.9,1468.0 2754.1,1470.0 2762.3,1464.7 2776.7,1465.9 2793.2,1469.6 2805.5,1467.6 2846.7,1467.6 2854.9,1470.5 2883.7,1468.0 2896.0,1478.3 2904.3,1477.0 2908.4,1480.3 2920.7,1478.3 2953.7,1477.0 2978.4,1479.9 2990.7,1490.6 2998.9,1486.1 3015.4,1485.3 3044.2,1481.2 3064.8,1482.4 3075.1,1485.3 3093.6,1483.2 3118.3,1485.3 3130.6,1485.3 3145.0,1490.6 3175.9,1490.2 3188.2,1492.3 3200.6,1494.3 3218.0,1496.0 3218.0,1556.0 189.9,1556.0" fill="#0d1120" clip-path="url(#dzout)"/>
<polyline points="189.9,1526.3 195.0,1522.4 201.8,1527.1 227.5,1531.9 239.4,1529.5 253.3,1531.5 279.0,1527.5 294.9,1529.5 306.7,1527.1 322.6,1529.5 370.1,1526.3 380.0,1523.6 385.9,1525.1 417.6,1525.5 429.5,1523.6 481.0,1522.4 520.6,1518.4 532.5,1520.4 552.3,1520.4 564.2,1517.2 615.6,1516.4 647.3,1515.2 659.2,1514.5 671.1,1508.1 694.9,1506.5 710.7,1509.3 754.3,1508.5 793.9,1510.5 837.4,1513.3 869.1,1514.5 908.7,1510.5 968.1,1508.5 1003.8,1511.3 1015.6,1506.5 1023.6,1505.3 1039.4,1511.3 1051.3,1513.3 1087.0,1518.4 1098.8,1515.2 1110.7,1517.2 1130.5,1512.5 1150.3,1511.3 1158.2,1514.1 1180.0,1512.1 1195.8,1515.2 1201.8,1514.1 1217.6,1519.2 1229.5,1513.3 1255.2,1512.5 1261.2,1518.0 1279.0,1515.2 1292.9,1520.4 1298.8,1517.6 1326.5,1515.2 1350.3,1512.9 1356.2,1515.2 1393.9,1514.5 1413.7,1509.7 1429.5,1510.5 1435.4,1513.3 1457.2,1509.7 1485.0,1509.3 1528.5,1513.7 1552.3,1512.1 1576.0,1518.4 1587.9,1516.0 1631.5,1516.0 1647.3,1520.0 1679.0,1521.2 1694.9,1519.2 1698.8,1523.2 1710.7,1524.0 1720.6,1527.1 1734.5,1524.0 1782.0,1524.0 1793.9,1526.3 1813.7,1527.1 1837.4,1522.4 1888.9,1522.4 1896.8,1526.3 1932.5,1529.1 1964.2,1526.3 1980.0,1529.5 1991.9,1528.7 2019.6,1532.7 2031.5,1530.3 2063.2,1530.3 2075.0,1527.1 2130.5,1525.1 2138.4,1527.1 2170.0,1525.1 2200.2,1527.9 2221.2,1529.3 2241.7,1528.1 2274.7,1527.7 2278.8,1531.4 2319.9,1529.3 2344.6,1527.7 2369.3,1524.4 2379.6,1526.4 2389.9,1521.5 2410.5,1523.1 2426.9,1521.5 2447.5,1521.5 2459.8,1518.2 2468.1,1519.0 2476.3,1522.3 2496.9,1519.4 2517.4,1520.2 2529.8,1524.4 2544.2,1526.4 2554.5,1524.4 2558.6,1514.1 2568.9,1517.4 2575.1,1513.3 2581.2,1514.9 2587.4,1510.0 2591.5,1512.8 2599.8,1500.9 2612.1,1494.7 2622.4,1487.3 2632.7,1479.9 2647.1,1478.7 2653.3,1470.9 2669.7,1464.7 2680.0,1466.7 2686.2,1460.6 2696.5,1458.5 2702.6,1465.5 2712.9,1466.7 2719.1,1468.8 2747.9,1468.0 2754.1,1470.0 2762.3,1464.7 2776.7,1465.9 2793.2,1469.6 2805.5,1467.6 2846.7,1467.6 2854.9,1470.5 2883.7,1468.0 2896.0,1478.3 2904.3,1477.0 2908.4,1480.3 2920.7,1478.3 2953.7,1477.0 2978.4,1479.9 2990.7,1490.6 2998.9,1486.1 3015.4,1485.3 3044.2,1481.2 3064.8,1482.4 3075.1,1485.3 3093.6,1483.2 3118.3,1485.3 3130.6,1485.3 3145.0,1490.6 3175.9,1490.2 3188.2,1492.3 3200.6,1494.3 3218.0,1496.0" fill="none" stroke="#3b5597" stroke-width="1.8" clip-path="url(#dzout)"/>
<polygon points="189.9,1526.3 195.0,1522.4 201.8,1527.1 227.5,1531.9 239.4,1529.5 253.3,1531.5 279.0,1527.5 294.9,1529.5 306.7,1527.1 322.6,1529.5 370.1,1526.3 380.0,1523.6 385.9,1525.1 417.6,1525.5 429.5,1523.6 481.0,1522.4 520.6,1518.4 532.5,1520.4 552.3,1520.4 564.2,1517.2 615.6,1516.4 647.3,1515.2 659.2,1514.5 671.1,1508.1 694.9,1506.5 710.7,1509.3 754.3,1508.5 793.9,1510.5 837.4,1513.3 869.1,1514.5 908.7,1510.5 968.1,1508.5 1003.8,1511.3 1015.6,1506.5 1023.6,1505.3 1039.4,1511.3 1051.3,1513.3 1087.0,1518.4 1098.8,1515.2 1110.7,1517.2 1130.5,1512.5 1150.3,1511.3 1158.2,1514.1 1180.0,1512.1 1195.8,1515.2 1201.8,1514.1 1217.6,1519.2 1229.5,1513.3 1255.2,1512.5 1261.2,1518.0 1279.0,1515.2 1292.9,1520.4 1298.8,1517.6 1326.5,1515.2 1350.3,1512.9 1356.2,1515.2 1393.9,1514.5 1413.7,1509.7 1429.5,1510.5 1435.4,1513.3 1457.2,1509.7 1485.0,1509.3 1528.5,1513.7 1552.3,1512.1 1576.0,1518.4 1587.9,1516.0 1631.5,1516.0 1647.3,1520.0 1679.0,1521.2 1694.9,1519.2 1698.8,1523.2 1710.7,1524.0 1720.6,1527.1 1734.5,1524.0 1782.0,1524.0 1793.9,1526.3 1813.7,1527.1 1837.4,1522.4 1888.9,1522.4 1896.8,1526.3 1932.5,1529.1 1964.2,1526.3 1980.0,1529.5 1991.9,1528.7 2019.6,1532.7 2031.5,1530.3 2063.2,1530.3 2075.0,1527.1 2130.5,1525.1 2138.4,1527.1 2170.0,1525.1 2200.2,1527.9 2221.2,1529.3 2241.7,1528.1 2274.7,1527.7 2278.8,1531.4 2319.9,1529.3 2344.6,1527.7 2369.3,1524.4 2379.6,1526.4 2389.9,1521.5 2410.5,1523.1 2426.9,1521.5 2447.5,1521.5 2459.8,1518.2 2468.1,1519.0 2476.3,1522.3 2496.9,1519.4 2517.4,1520.2 2529.8,1524.4 2544.2,1526.4 2554.5,1524.4 2558.6,1514.1 2568.9,1517.4 2575.1,1513.3 2581.2,1514.9 2587.4,1510.0 2591.5,1512.8 2599.8,1500.9 2612.1,1494.7 2622.4,1487.3 2632.7,1479.9 2647.1,1478.7 2653.3,1470.9 2669.7,1464.7 2680.0,1466.7 2686.2,1460.6 2696.5,1458.5 2702.6,1465.5 2712.9,1466.7 2719.1,1468.8 2747.9,1468.0 2754.1,1470.0 2762.3,1464.7 2776.7,1465.9 2793.2,1469.6 2805.5,1467.6 2846.7,1467.6 2854.9,1470.5 2883.7,1468.0 2896.0,1478.3 2904.3,1477.0 2908.4,1480.3 2920.7,1478.3 2953.7,1477.0 2978.4,1479.9 2990.7,1490.6 2998.9,1486.1 3015.4,1485.3 3044.2,1481.2 3064.8,1482.4 3075.1,1485.3 3093.6,1483.2 3118.3,1485.3 3130.6,1485.3 3145.0,1490.6 3175.9,1490.2 3188.2,1492.3 3200.6,1494.3 3218.0,1496.0 3218.0,1556.0 189.9,1556.0" fill="#212943" clip-path="url(#dzin)"/>
<polyline points="189.9,1526.3 195.0,1522.4 201.8,1527.1 227.5,1531.9 239.4,1529.5 253.3,1531.5 279.0,1527.5 294.9,1529.5 306.7,1527.1 322.6,1529.5 370.1,1526.3 380.0,1523.6 385.9,1525.1 417.6,1525.5 429.5,1523.6 481.0,1522.4 520.6,1518.4 532.5,1520.4 552.3,1520.4 564.2,1517.2 615.6,1516.4 647.3,1515.2 659.2,1514.5 671.1,1508.1 694.9,1506.5 710.7,1509.3 754.3,1508.5 793.9,1510.5 837.4,1513.3 869.1,1514.5 908.7,1510.5 968.1,1508.5 1003.8,1511.3 1015.6,1506.5 1023.6,1505.3 1039.4,1511.3 1051.3,1513.3 1087.0,1518.4 1098.8,1515.2 1110.7,1517.2 1130.5,1512.5 1150.3,1511.3 1158.2,1514.1 1180.0,1512.1 1195.8,1515.2 1201.8,1514.1 1217.6,1519.2 1229.5,1513.3 1255.2,1512.5 1261.2,1518.0 1279.0,1515.2 1292.9,1520.4 1298.8,1517.6 1326.5,1515.2 1350.3,1512.9 1356.2,1515.2 1393.9,1514.5 1413.7,1509.7 1429.5,1510.5 1435.4,1513.3 1457.2,1509.7 1485.0,1509.3 1528.5,1513.7 1552.3,1512.1 1576.0,1518.4 1587.9,1516.0 1631.5,1516.0 1647.3,1520.0 1679.0,1521.2 1694.9,1519.2 1698.8,1523.2 1710.7,1524.0 1720.6,1527.1 1734.5,1524.0 1782.0,1524.0 1793.9,1526.3 1813.7,1527.1 1837.4,1522.4 1888.9,1522.4 1896.8,1526.3 1932.5,1529.1 1964.2,1526.3 1980.0,1529.5 1991.9,1528.7 2019.6,1532.7 2031.5,1530.3 2063.2,1530.3 2075.0,1527.1 2130.5,1525.1 2138.4,1527.1 2170.0,1525.1 2200.2,1527.9 2221.2,1529.3 2241.7,1528.1 2274.7,1527.7 2278.8,1531.4 2319.9,1529.3 2344.6,1527.7 2369.3,1524.4 2379.6,1526.4 2389.9,1521.5 2410.5,1523.1 2426.9,1521.5 2447.5,1521.5 2459.8,1518.2 2468.1,1519.0 2476.3,1522.3 2496.9,1519.4 2517.4,1520.2 2529.8,1524.4 2544.2,1526.4 2554.5,1524.4 2558.6,1514.1 2568.9,1517.4 2575.1,1513.3 2581.2,1514.9 2587.4,1510.0 2591.5,1512.8 2599.8,1500.9 2612.1,1494.7 2622.4,1487.3 2632.7,1479.9 2647.1,1478.7 2653.3,1470.9 2669.7,1464.7 2680.0,1466.7 2686.2,1460.6 2696.5,1458.5 2702.6,1465.5 2712.9,1466.7 2719.1,1468.8 2747.9,1468.0 2754.1,1470.0 2762.3,1464.7 2776.7,1465.9 2793.2,1469.6 2805.5,1467.6 2846.7,1467.6 2854.9,1470.5 2883.7,1468.0 2896.0,1478.3 2904.3,1477.0 2908.4,1480.3 2920.7,1478.3 2953.7,1477.0 2978.4,1479.9 2990.7,1490.6 2998.9,1486.1 3015.4,1485.3 3044.2,1481.2 3064.8,1482.4 3075.1,1485.3 3093.6,1483.2 3118.3,1485.3 3130.6,1485.3 3145.0,1490.6 3175.9,1490.2 3188.2,1492.3 3200.6,1494.3 3218.0,1496.0" fill="none" stroke="#6683c9" stroke-width="1.8" clip-path="url(#dzin)"/>
<rect x="1691.2" y="1481.0" width="29.0" height="35.0" rx="10" fill="#3a3d4c"/>
<line x1="1702.4" y1="1492.3" x2="1702.4" y2="1504.6" stroke="#a4a8b4" stroke-width="2.2"/>
<line x1="1709.0" y1="1492.3" x2="1709.0" y2="1504.6" stroke="#a4a8b4" stroke-width="2.2"/>
<rect x="3202.5" y="1481.0" width="29.0" height="35.0" rx="10" fill="#3a3d4c"/>
<line x1="3213.7" y1="1492.3" x2="3213.7" y2="1504.6" stroke="#a4a8b4" stroke-width="2.2"/>
<line x1="3220.3" y1="1492.3" x2="3220.3" y2="1504.6" stroke="#a4a8b4" stroke-width="2.2"/>
</svg>
</body></html>
